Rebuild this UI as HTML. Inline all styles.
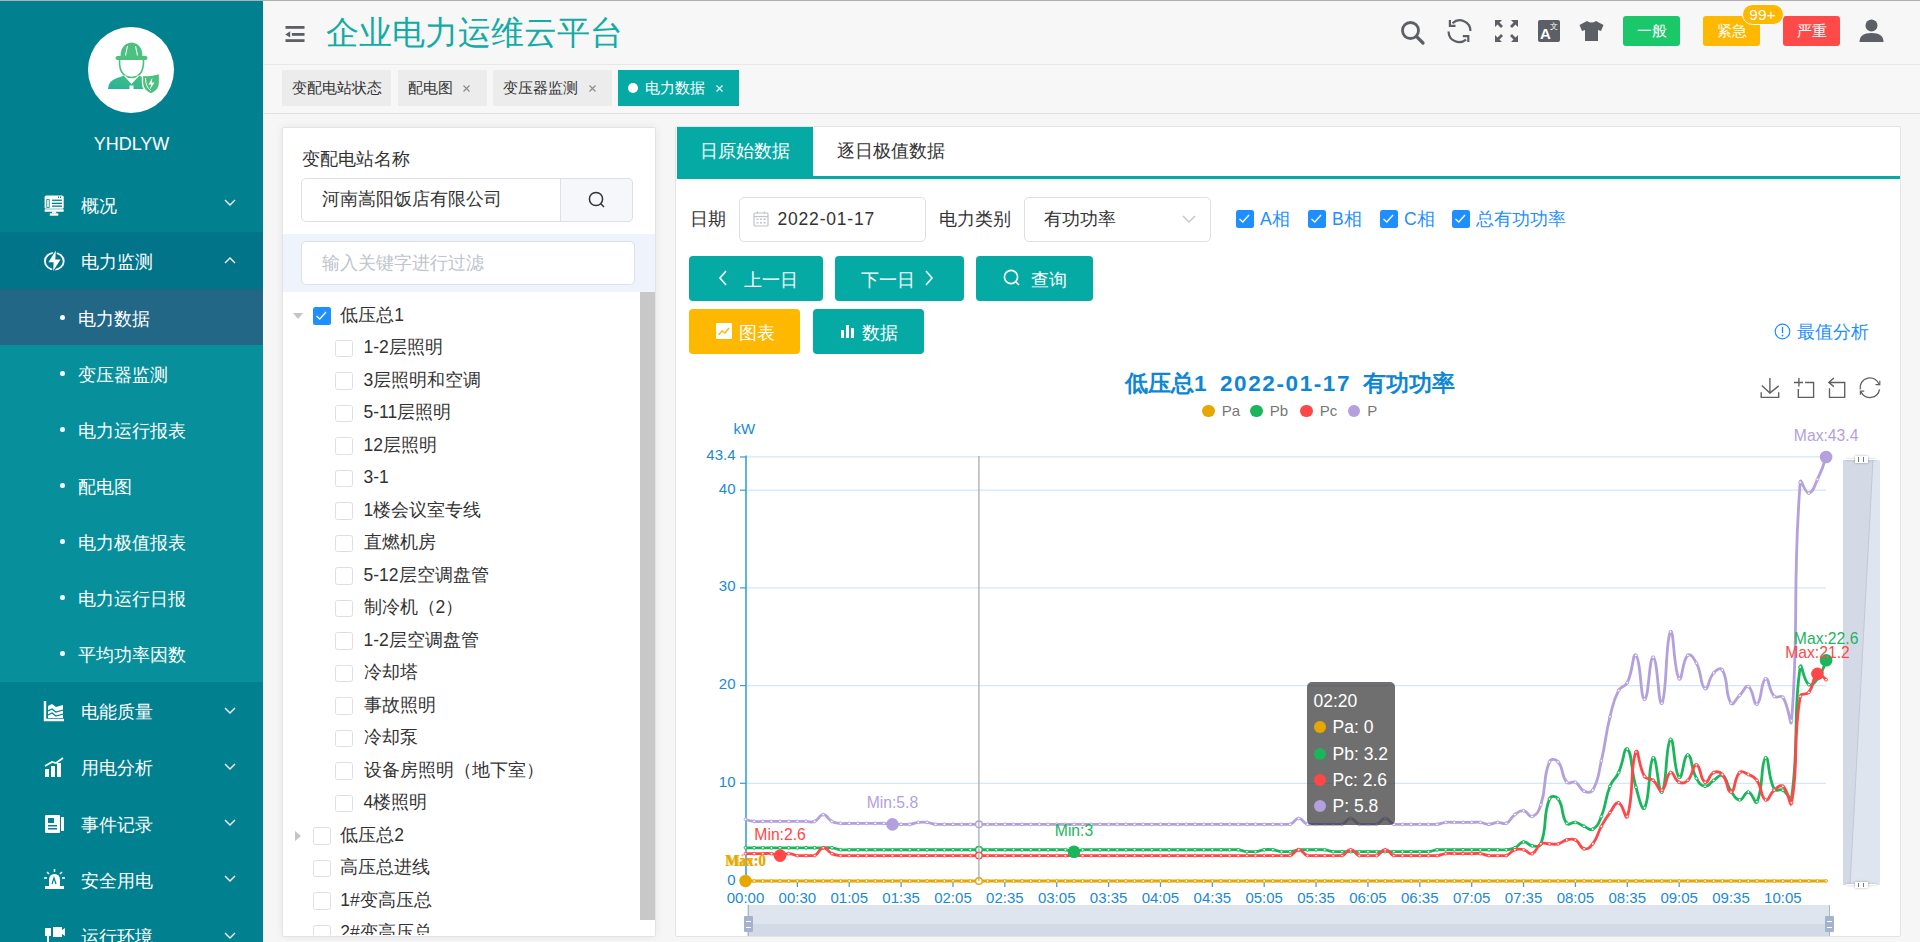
<!DOCTYPE html><html><head><meta charset="utf-8"><style>
*{margin:0;padding:0;box-sizing:border-box}
html,body{width:1920px;height:942px;overflow:hidden;background:#f6f6f6;font-family:"Liberation Sans",sans-serif}
.a{position:absolute}
.t{position:absolute;white-space:nowrap}
svg{position:absolute;overflow:visible}
</style></head><body><div class="a" style="left:0;top:0;width:263px;height:942px;background:#01808f"></div>
<div class="a" style="left:0;top:232px;width:263px;height:57px;background:#01748a"></div>
<div class="a" style="left:0;top:289px;width:263px;height:393px;background:#078f9c"></div>
<div class="a" style="left:0;top:289px;width:263px;height:56px;background:#236786"></div>
<div class="a" style="left:0;top:0;width:1920px;height:1px;background:#b0b0b0;z-index:50"></div>
<div class="a" style="left:88px;top:27px;width:86px;height:86px;border-radius:50%;background:#fff"></div>
<svg style="left:107.5px;top:42px" width="52" height="52" viewBox="0 0 52 52">
<defs><linearGradient id="ag" x1="0" y1="1" x2="1" y2="0"><stop offset="0" stop-color="#22b39b"/><stop offset="1" stop-color="#4cc17c"/></linearGradient></defs>
<path d="M12.5 15 Q12.5 1.5 23.5 0.5 Q34.5 1.5 34.5 15 Z" fill="#4cc17f"/>
<rect x="7.5" y="14" width="32" height="4" rx="2" fill="#4cc17f"/>
<path d="M19.5 4 L17.5 13.5 M27.5 4 L29.5 13.5" stroke="#fff" stroke-width="1.1"/>
<path d="M11.5 18 Q11 35 23.5 35.5 Q36 35 35.5 18" fill="none" stroke="#4cc17f" stroke-width="1.6"/>
<path d="M0 47 Q0.5 38.5 9 36 L16.5 33.5 L23.5 41 L30.5 33.5 L36 35.5 L36 47 Z" fill="url(#ag)"/>
<path d="M16.5 33.5 L23.5 41 L30.5 33.5" fill="none" stroke="#fff" stroke-width="1.2"/>
<rect x="21.5" y="43.5" width="4" height="3.5" fill="#fff"/>
<path d="M34.5 33 Q43 34.5 51.5 31.5 L51.5 41 Q51.5 48.5 43 52 Q34.5 48.5 34.5 41 Z" fill="#4cc17f" stroke="#fff" stroke-width="1.3"/>
<path d="M37.5 36 Q37.5 45 43 49" fill="none" stroke="#fff" stroke-width="0.9"/>
<path d="M44.5 35.5 L40.5 42.5 L43.3 42.5 L41.5 48 L46.5 40.5 L43.6 40.5 Z" fill="#fff"/>
</svg>
<div class="t" style="left:0px;top:132.40px;height:25.20px;line-height:25.20px;font-size:18px;color:#fff;"><div style="width:263px;text-align:center">YHDLYW</div></div>
<svg style="left:43.5px;top:194.0px" width="21" height="21" viewBox="0 0 21 21"><rect x="0.6" y="1.4" width="19.1" height="13.3" rx="1.5" fill="#fff"/><rect x="0.6" y="15.2" width="19.1" height="2.6" rx="0.6" fill="#fff"/><rect x="8" y="17.6" width="4.2" height="1.8" fill="#fff"/><rect x="5.8" y="19.3" width="8.5" height="2.4" fill="#fff"/><rect x="2.4" y="5.2" width="3.2" height="8.6" fill="#01808f"/><rect x="3.2" y="6" width="1.6" height="7" fill="#fff"/><rect x="8" y="5.6" width="10" height="1.3" fill="#01808f"/><rect x="8" y="8.7" width="10" height="1.3" fill="#01808f"/><rect x="8" y="11.5" width="10" height="1.3" fill="#01808f"/><rect x="14" y="2.5" width="1" height="1.5" fill="#01808f"/><rect x="16" y="2.5" width="1" height="1.5" fill="#01808f"/></svg>
<div class="t" style="left:80.5px;top:193.75px;height:24.50px;line-height:24.50px;font-size:17.5px;color:#fff;">概况</div>
<svg style="left:224px;top:198.5px" width="12" height="7" viewBox="0 0 12 7"><path d="M1 1 L6 6 L11 1" fill="none" stroke="#fff" stroke-width="1.4"/></svg>
<svg style="left:43.5px;top:250.3px" width="21" height="21" viewBox="0 0 21 21"><ellipse cx="10.3" cy="11.2" rx="9.4" ry="8.4" fill="none" stroke="#fff" stroke-width="1.8"/><path d="M11.8 0.6 L4.4 12.2 L9.6 12.2 L9.2 21 L16.5 9.6 L11.3 9.6 Z" fill="#fff" stroke="#01748a" stroke-width="2.2" stroke-linejoin="round"/><path d="M11.8 0.6 L4.4 12.2 L9.6 12.2 L9.2 21 L16.5 9.6 L11.3 9.6 Z" fill="#fff"/></svg>
<div class="t" style="left:80.5px;top:250.05px;height:24.50px;line-height:24.50px;font-size:17.5px;color:#fff;">电力监测</div>
<svg style="left:224px;top:256.8px" width="12" height="7" viewBox="0 0 12 7"><path d="M1 6 L6 1 L11 6" fill="none" stroke="#fff" stroke-width="1.4"/></svg>
<div class="a" style="left:60px;top:314.5px;width:5px;height:5px;border-radius:50%;background:#fff"></div>
<div class="t" style="left:78px;top:306.55px;height:24.50px;line-height:24.50px;font-size:17.5px;color:#fff;">电力数据</div>
<div class="a" style="left:60px;top:370.6px;width:5px;height:5px;border-radius:50%;background:#fff"></div>
<div class="t" style="left:78px;top:362.69px;height:24.50px;line-height:24.50px;font-size:17.5px;color:#fff;">变压器监测</div>
<div class="a" style="left:60px;top:426.8px;width:5px;height:5px;border-radius:50%;background:#fff"></div>
<div class="t" style="left:78px;top:418.83px;height:24.50px;line-height:24.50px;font-size:17.5px;color:#fff;">电力运行报表</div>
<div class="a" style="left:60px;top:482.9px;width:5px;height:5px;border-radius:50%;background:#fff"></div>
<div class="t" style="left:78px;top:474.97px;height:24.50px;line-height:24.50px;font-size:17.5px;color:#fff;">配电图</div>
<div class="a" style="left:60px;top:539.1px;width:5px;height:5px;border-radius:50%;background:#fff"></div>
<div class="t" style="left:78px;top:531.11px;height:24.50px;line-height:24.50px;font-size:17.5px;color:#fff;">电力极值报表</div>
<div class="a" style="left:60px;top:595.2px;width:5px;height:5px;border-radius:50%;background:#fff"></div>
<div class="t" style="left:78px;top:587.25px;height:24.50px;line-height:24.50px;font-size:17.5px;color:#fff;">电力运行日报</div>
<div class="a" style="left:60px;top:651.3px;width:5px;height:5px;border-radius:50%;background:#fff"></div>
<div class="t" style="left:78px;top:643.39px;height:24.50px;line-height:24.50px;font-size:17.5px;color:#fff;">平均功率因数</div>
<svg style="left:43.5px;top:700.0px" width="21" height="21" viewBox="0 0 21 21"><path d="M1 1 L1 20 L20 20" fill="none" stroke="#fff" stroke-width="2.4"/><path d="M4 6 L8 4 L12 7 L19 5 L19 18 L4 18 Z" fill="#fff"/><path d="M4 11 L8 9 L12 12 L19 10" stroke="#01808f" stroke-width="1.3" fill="none"/><path d="M4 15 L8 13 L12 16 L19 14" stroke="#01808f" stroke-width="1.3" fill="none"/></svg>
<div class="t" style="left:80.5px;top:699.75px;height:24.50px;line-height:24.50px;font-size:17.5px;color:#fff;">电能质量</div>
<svg style="left:224px;top:706.5px" width="12" height="7" viewBox="0 0 12 7"><path d="M1 1 L6 6 L11 1" fill="none" stroke="#fff" stroke-width="1.4"/></svg>
<svg style="left:43.5px;top:756.5px" width="21" height="21" viewBox="0 0 21 21"><rect x="1" y="12" width="4" height="8" fill="#fff"/><rect x="7" y="9" width="4" height="11" fill="#fff"/><rect x="13" y="6" width="4" height="14" fill="#fff"/><path d="M1 9 L8 5 L12 6 L19 1" stroke="#fff" stroke-width="1.8" fill="none"/></svg>
<div class="t" style="left:80.5px;top:756.25px;height:24.50px;line-height:24.50px;font-size:17.5px;color:#fff;">用电分析</div>
<svg style="left:224px;top:763px" width="12" height="7" viewBox="0 0 12 7"><path d="M1 1 L6 6 L11 1" fill="none" stroke="#fff" stroke-width="1.4"/></svg>
<svg style="left:43.5px;top:812.8px" width="21" height="21" viewBox="0 0 21 21"><rect x="1" y="2" width="15" height="18" rx="1" fill="#fff"/><rect x="4" y="5" width="6" height="5" fill="#01808f"/><rect x="4" y="12" width="9" height="1.5" fill="#01808f"/><rect x="4" y="15" width="9" height="1.5" fill="#01808f"/><rect x="17" y="4" width="3" height="14" fill="#fff"/></svg>
<div class="t" style="left:80.5px;top:812.55px;height:24.50px;line-height:24.50px;font-size:17.5px;color:#fff;">事件记录</div>
<svg style="left:224px;top:819.3px" width="12" height="7" viewBox="0 0 12 7"><path d="M1 1 L6 6 L11 1" fill="none" stroke="#fff" stroke-width="1.4"/></svg>
<svg style="left:43.5px;top:868.9px" width="21" height="21" viewBox="0 0 21 21"><path d="M5 17 L5 11 Q5 5 10.5 5 Q16 5 16 11 L16 17 Z" fill="#fff"/><rect x="1" y="17" width="19" height="3" fill="#fff"/><path d="M10.5 0 L10.5 3 M3 3 L5 5 M18 3 L16 5 M0 9 L3 9 M18 9 L21 9" stroke="#fff" stroke-width="1.5"/><path d="M8 15 L10 9 L12 15" stroke="#01808f" stroke-width="1.2" fill="none"/></svg>
<div class="t" style="left:80.5px;top:868.65px;height:24.50px;line-height:24.50px;font-size:17.5px;color:#fff;">安全用电</div>
<svg style="left:224px;top:875.4px" width="12" height="7" viewBox="0 0 12 7"><path d="M1 1 L6 6 L11 1" fill="none" stroke="#fff" stroke-width="1.4"/></svg>
<svg style="left:43.5px;top:925.0px" width="21" height="21" viewBox="0 0 21 21"><rect x="1" y="3" width="6" height="8" fill="#fff"/><rect x="9" y="2" width="9" height="10" fill="#fff"/><rect x="3" y="11" width="2" height="9" fill="#fff"/><path d="M18 5 L21 3 L21 11 L18 9 Z" fill="#fff"/></svg>
<div class="t" style="left:80.5px;top:924.75px;height:24.50px;line-height:24.50px;font-size:17.5px;color:#fff;">运行环境</div>
<svg style="left:224px;top:931.5px" width="12" height="7" viewBox="0 0 12 7"><path d="M1 1 L6 6 L11 1" fill="none" stroke="#fff" stroke-width="1.4"/></svg>
<div class="a" style="left:263px;top:1px;width:1657px;height:63px;background:#f7f7f7"></div>
<div class="a" style="left:263px;top:64px;width:1657px;height:50px;background:#f7f7f7;border-top:1px solid #e8e8e8;border-bottom:1px solid #e2e2e2"></div>
<svg style="left:284.5px;top:25px" width="21" height="18" viewBox="0 0 21 18"><rect x="0.5" y="1" width="19" height="2.8" fill="#5c5f66"/><rect x="6.9" y="8" width="12.6" height="2.8" fill="#5c5f66"/><rect x="0.5" y="14.2" width="19" height="2.8" fill="#5c5f66"/><path d="M0.3 9.4 L5.2 6.2 L5.2 12.6 Z" fill="#5c5f66"/></svg>
<div class="t" style="left:326px;top:10.40px;height:46.20px;line-height:46.20px;font-size:33px;color:#13aba5;">企业电力运维云平台</div>
<svg style="left:1400px;top:20px" width="26" height="26" viewBox="0 0 26 26"><circle cx="10.5" cy="10.5" r="8" fill="none" stroke="#5c5f66" stroke-width="2.8"/><path d="M16.5 16.5 L23 23" stroke="#5c5f66" stroke-width="3.2" stroke-linecap="round"/></svg>
<svg style="left:1446px;top:19px" width="27" height="26" viewBox="0 0 27 26"><g fill="none" stroke="#5c5f66" stroke-width="2.2"><path d="M6.5 4.2 A10.6 10.6 0 0 1 24.4 12"/><path d="M2.6 12.4 A10.6 10.6 0 0 0 20 20.6"/><path d="M3.9 1 L3.9 6.8 L9.5 6.8"/><path d="M16.8 17.1 L22.3 17.1 L22.3 23"/></g></svg>
<svg style="left:1494px;top:19px" width="25" height="24" viewBox="0 0 25 24"><g fill="#5c5f66"><path d="M1 1 L8 1 L5.5 3.5 L9 7 L7 9 L3.5 5.5 L1 8 Z"/><path d="M24 1 L17 1 L19.5 3.5 L16 7 L18 9 L21.5 5.5 L24 8 Z"/><path d="M1 23 L8 23 L5.5 20.5 L9 17 L7 15 L3.5 18.5 L1 16 Z"/><path d="M24 23 L17 23 L19.5 20.5 L16 17 L18 15 L21.5 18.5 L24 16 Z"/></g></svg>
<svg style="left:1538px;top:20px" width="22" height="22" viewBox="0 0 22 22"><rect x="0" y="0" width="22" height="22" rx="2" fill="#5c5f66"/><text x="2" y="19" font-size="15" font-weight="bold" fill="#fff" font-family="Liberation Sans">A</text><text x="12" y="9" font-size="8" fill="#fff">文</text></svg>
<svg style="left:1579px;top:20px" width="25" height="22" viewBox="0 0 25 22"><path d="M8 1 Q12.5 4 17 1 L24.5 5 L22 11 L19 10 L19 21 L6 21 L6 10 L3 11 L0.5 5 Z" fill="#5c5f66"/></svg>
<div class="a" style="left:1623px;top:16px;width:57px;height:30px;border-radius:3px;background:#1ac769"></div>
<div class="t" style="left:1623px;top:16px;width:57px;height:30px;line-height:30px;text-align:center;font-size:15px;color:#fff">一般</div>
<div class="a" style="left:1703px;top:16px;width:57px;height:30px;border-radius:3px;background:#ffb800"></div>
<div class="t" style="left:1703px;top:16px;width:57px;height:30px;line-height:30px;text-align:center;font-size:15px;color:#fff">紧急</div>
<div class="a" style="left:1783px;top:16px;width:57px;height:30px;border-radius:3px;background:#ff4a4a"></div>
<div class="t" style="left:1783px;top:16px;width:57px;height:30px;line-height:30px;text-align:center;font-size:15px;color:#fff">严重</div>
<div class="a" style="left:1741.5px;top:3.5px;width:42px;height:21px;border-radius:10.5px;background:#ffb800;border:1px solid #fff"></div>
<div class="t" style="left:1741.5px;top:3.5px;width:42px;height:21px;line-height:21px;text-align:center;font-size:15.5px;color:#fff">99+</div>
<svg style="left:1859px;top:19px" width="25" height="24" viewBox="0 0 25 24"><circle cx="12.5" cy="6.5" r="6" fill="#5c5f66"/><path d="M0.5 23 Q0.5 14 12.5 14 Q24.5 14 24.5 23 Z" fill="#5c5f66"/></svg>
<div class="a" style="left:281.5px;top:69.5px;width:109.5px;height:36px;background:#ececec"></div>
<div class="t" style="left:291.5px;top:77.00px;height:21.00px;line-height:21.00px;font-size:15px;color:#333;">变配电站状态</div>
<div class="a" style="left:398px;top:69.5px;width:88.5px;height:36px;background:#ececec"></div>
<div class="t" style="left:408px;top:77.00px;height:21.00px;line-height:21.00px;font-size:15px;color:#333;">配电图</div>
<svg style="left:463.0px;top:85px" width="7" height="7" viewBox="0 0 7 7"><path d="M0.5 0.5 L6.5 6.5 M6.5 0.5 L0.5 6.5" stroke="#8a8a8a" stroke-width="1.1"/></svg>
<div class="a" style="left:493px;top:69.5px;width:119px;height:36px;background:#ececec"></div>
<div class="t" style="left:503px;top:77.00px;height:21.00px;line-height:21.00px;font-size:15px;color:#333;">变压器监测</div>
<svg style="left:588.5px;top:85px" width="7" height="7" viewBox="0 0 7 7"><path d="M0.5 0.5 L6.5 6.5 M6.5 0.5 L0.5 6.5" stroke="#8a8a8a" stroke-width="1.1"/></svg>
<div class="a" style="left:618px;top:69.5px;width:121px;height:36px;background:#06aaa5"></div>
<div class="a" style="left:628px;top:82.5px;width:10px;height:10px;border-radius:50%;background:#fff"></div>
<div class="t" style="left:645px;top:77.00px;height:21.00px;line-height:21.00px;font-size:15px;color:#fff;">电力数据</div>
<svg style="left:715.5px;top:85px" width="7" height="7" viewBox="0 0 7 7"><path d="M0.5 0.5 L6.5 6.5 M6.5 0.5 L0.5 6.5" stroke="#fff" stroke-width="1.1"/></svg>
<div class="a" style="left:281.5px;top:126.5px;width:374px;height:810px;background:#fff;border:1px solid #e3e3e3;border-radius:2px;box-shadow:0 0 9px rgba(0,0,0,0.07)"></div>
<div class="t" style="left:301.5px;top:147.25px;height:24.50px;line-height:24.50px;font-size:17.5px;color:#333;">变配电站名称</div>
<div class="a" style="left:301px;top:177.5px;width:332px;height:44px;border:1px solid #dcdfe6;border-radius:5px;background:#fff"></div>
<div class="a" style="left:560px;top:177.5px;width:73px;height:44px;border:1px solid #dcdfe6;border-radius:0 5px 5px 0;background:#f5f7fa"></div>
<svg style="left:588px;top:191px" width="18" height="18" viewBox="0 0 18 18"><circle cx="8" cy="8" r="6.6" fill="none" stroke="#333" stroke-width="1.5"/><path d="M12.8 12.8 L16 16" stroke="#333" stroke-width="1.5"/></svg>
<div class="t" style="left:321.5px;top:187.25px;height:24.50px;line-height:24.50px;font-size:17.5px;color:#333;">河南嵩阳饭店有限公司</div>
<div class="a" style="left:283px;top:234px;width:372px;height:57.5px;background:#eef3fc"></div>
<div class="a" style="left:301px;top:241px;width:334px;height:44px;border:1px solid #dcdfe6;border-radius:5px;background:#fff"></div>
<div class="t" style="left:321.5px;top:250.75px;height:24.50px;line-height:24.50px;font-size:17.5px;color:#c0c4cc;">输入关键字进行过滤</div>
<div class="a" style="left:640px;top:291.5px;width:15px;height:628px;background:#c8c8c8"></div>
<div class="a" style="left:283px;top:291.5px;width:357px;height:643px;overflow:hidden">
<svg style="left:10px;top:21.5px" width="10" height="6" viewBox="0 0 10 6"><path d="M0 0 L10 0 L5 6 Z" fill="#c0c4cc"/></svg>
<div class="a" style="left:30px;top:15.75px;width:17.5px;height:17.5px;border-radius:2.5px;background:#1f8fff"></div>
<svg style="left:30px;top:15.75px" width="17.5" height="17.5" viewBox="0 0 17.5 17.5"><path d="M3.5 9 L6.8 12 L13 5" fill="none" stroke="#fff" stroke-width="1.3"/></svg>
<div class="t" style="left:57.19999999999999px;top:11.25px;height:24.50px;line-height:24.50px;font-size:17.5px;color:#333;">低压总1</div>
<div class="a" style="left:52.30000000000001px;top:48.25px;width:17.5px;height:17.5px;border-radius:2.5px;border:1px solid #dcdfe6;background:#fff"></div>
<div class="t" style="left:80.5px;top:43.75px;height:24.50px;line-height:24.50px;font-size:17.5px;color:#333;">1-2层照明</div>
<div class="a" style="left:52.30000000000001px;top:80.75px;width:17.5px;height:17.5px;border-radius:2.5px;border:1px solid #dcdfe6;background:#fff"></div>
<div class="t" style="left:80.5px;top:76.25px;height:24.50px;line-height:24.50px;font-size:17.5px;color:#333;">3层照明和空调</div>
<div class="a" style="left:52.30000000000001px;top:113.25px;width:17.5px;height:17.5px;border-radius:2.5px;border:1px solid #dcdfe6;background:#fff"></div>
<div class="t" style="left:80.5px;top:108.75px;height:24.50px;line-height:24.50px;font-size:17.5px;color:#333;">5-11层照明</div>
<div class="a" style="left:52.30000000000001px;top:145.75px;width:17.5px;height:17.5px;border-radius:2.5px;border:1px solid #dcdfe6;background:#fff"></div>
<div class="t" style="left:80.5px;top:141.25px;height:24.50px;line-height:24.50px;font-size:17.5px;color:#333;">12层照明</div>
<div class="a" style="left:52.30000000000001px;top:178.25px;width:17.5px;height:17.5px;border-radius:2.5px;border:1px solid #dcdfe6;background:#fff"></div>
<div class="t" style="left:80.5px;top:173.75px;height:24.50px;line-height:24.50px;font-size:17.5px;color:#333;">3-1</div>
<div class="a" style="left:52.30000000000001px;top:210.75px;width:17.5px;height:17.5px;border-radius:2.5px;border:1px solid #dcdfe6;background:#fff"></div>
<div class="t" style="left:80.5px;top:206.25px;height:24.50px;line-height:24.50px;font-size:17.5px;color:#333;">1楼会议室专线</div>
<div class="a" style="left:52.30000000000001px;top:243.25px;width:17.5px;height:17.5px;border-radius:2.5px;border:1px solid #dcdfe6;background:#fff"></div>
<div class="t" style="left:80.5px;top:238.75px;height:24.50px;line-height:24.50px;font-size:17.5px;color:#333;">直燃机房</div>
<div class="a" style="left:52.30000000000001px;top:275.75px;width:17.5px;height:17.5px;border-radius:2.5px;border:1px solid #dcdfe6;background:#fff"></div>
<div class="t" style="left:80.5px;top:271.25px;height:24.50px;line-height:24.50px;font-size:17.5px;color:#333;">5-12层空调盘管</div>
<div class="a" style="left:52.30000000000001px;top:308.25px;width:17.5px;height:17.5px;border-radius:2.5px;border:1px solid #dcdfe6;background:#fff"></div>
<div class="t" style="left:80.5px;top:303.75px;height:24.50px;line-height:24.50px;font-size:17.5px;color:#333;">制冷机（2）</div>
<div class="a" style="left:52.30000000000001px;top:340.75px;width:17.5px;height:17.5px;border-radius:2.5px;border:1px solid #dcdfe6;background:#fff"></div>
<div class="t" style="left:80.5px;top:336.25px;height:24.50px;line-height:24.50px;font-size:17.5px;color:#333;">1-2层空调盘管</div>
<div class="a" style="left:52.30000000000001px;top:373.25px;width:17.5px;height:17.5px;border-radius:2.5px;border:1px solid #dcdfe6;background:#fff"></div>
<div class="t" style="left:80.5px;top:368.75px;height:24.50px;line-height:24.50px;font-size:17.5px;color:#333;">冷却塔</div>
<div class="a" style="left:52.30000000000001px;top:405.75px;width:17.5px;height:17.5px;border-radius:2.5px;border:1px solid #dcdfe6;background:#fff"></div>
<div class="t" style="left:80.5px;top:401.25px;height:24.50px;line-height:24.50px;font-size:17.5px;color:#333;">事故照明</div>
<div class="a" style="left:52.30000000000001px;top:438.25px;width:17.5px;height:17.5px;border-radius:2.5px;border:1px solid #dcdfe6;background:#fff"></div>
<div class="t" style="left:80.5px;top:433.75px;height:24.50px;line-height:24.50px;font-size:17.5px;color:#333;">冷却泵</div>
<div class="a" style="left:52.30000000000001px;top:470.75px;width:17.5px;height:17.5px;border-radius:2.5px;border:1px solid #dcdfe6;background:#fff"></div>
<div class="t" style="left:80.5px;top:466.25px;height:24.50px;line-height:24.50px;font-size:17.5px;color:#333;">设备房照明（地下室）</div>
<div class="a" style="left:52.30000000000001px;top:503.25px;width:17.5px;height:17.5px;border-radius:2.5px;border:1px solid #dcdfe6;background:#fff"></div>
<div class="t" style="left:80.5px;top:498.75px;height:24.50px;line-height:24.50px;font-size:17.5px;color:#333;">4楼照明</div>
<svg style="left:12px;top:539.5px" width="6" height="10" viewBox="0 0 6 10"><path d="M0 0 L6 5 L0 10 Z" fill="#c0c4cc"/></svg>
<div class="a" style="left:30px;top:535.75px;width:17.5px;height:17.5px;border-radius:2.5px;border:1px solid #dcdfe6;background:#fff"></div>
<div class="t" style="left:57.19999999999999px;top:531.25px;height:24.50px;line-height:24.50px;font-size:17.5px;color:#333;">低压总2</div>
<div class="a" style="left:30px;top:568.25px;width:17.5px;height:17.5px;border-radius:2.5px;border:1px solid #dcdfe6;background:#fff"></div>
<div class="t" style="left:57.19999999999999px;top:563.75px;height:24.50px;line-height:24.50px;font-size:17.5px;color:#333;">高压总进线</div>
<div class="a" style="left:30px;top:600.75px;width:17.5px;height:17.5px;border-radius:2.5px;border:1px solid #dcdfe6;background:#fff"></div>
<div class="t" style="left:57.19999999999999px;top:596.25px;height:24.50px;line-height:24.50px;font-size:17.5px;color:#333;">1#变高压总</div>
<div class="a" style="left:30px;top:633.25px;width:17.5px;height:17.5px;border-radius:2.5px;border:1px solid #dcdfe6;background:#fff"></div>
<div class="t" style="left:57.19999999999999px;top:628.75px;height:24.50px;line-height:24.50px;font-size:17.5px;color:#333;">2#变高压总</div>
</div>
<div class="a" style="left:675px;top:126px;width:1226px;height:810.5px;background:#fff;border:1px solid #e3e3e3;border-radius:2px"></div>
<div class="a" style="left:676.5px;top:175.5px;width:1223.5px;height:3px;background:#06aaa5"></div>
<div class="a" style="left:676.5px;top:127px;width:136.5px;height:49px;background:#06aaa5"></div>
<div class="t" style="left:699.5px;top:138.75px;height:24.50px;line-height:24.50px;font-size:17.5px;color:#fff;">日原始数据</div>
<div class="t" style="left:836.5px;top:138.75px;height:24.50px;line-height:24.50px;font-size:17.5px;color:#333;">逐日极值数据</div>
<div class="t" style="left:690px;top:206.75px;height:24.50px;line-height:24.50px;font-size:17.5px;color:#333;">日期</div>
<div class="a" style="left:739px;top:197px;width:187px;height:45px;border:1px solid #dcdfe6;border-radius:5px"></div>
<svg style="left:752.5px;top:211px" width="16" height="16" viewBox="0 0 16 16"><rect x="1" y="2" width="14" height="13" rx="1" fill="none" stroke="#c0c4cc" stroke-width="1.2"/><path d="M1 5.5 L15 5.5" stroke="#c0c4cc" stroke-width="1.2"/><path d="M4.5 0.5 L4.5 3 M11.5 0.5 L11.5 3" stroke="#c0c4cc" stroke-width="1.2"/><g fill="#c0c4cc"><rect x="3.5" y="7.5" width="2" height="1.5"/><rect x="7" y="7.5" width="2" height="1.5"/><rect x="10.5" y="7.5" width="2" height="1.5"/><rect x="3.5" y="11" width="2" height="1.5"/><rect x="7" y="11" width="2" height="1.5"/><rect x="10.5" y="11" width="2" height="1.5"/></g></svg>
<div class="t" style="left:777.5px;top:206.75px;height:24.50px;line-height:24.50px;font-size:17.5px;color:#333;letter-spacing:0.8px">2022-01-17</div>
<div class="t" style="left:939px;top:206.75px;height:24.50px;line-height:24.50px;font-size:17.5px;color:#333;">电力类别</div>
<div class="a" style="left:1024px;top:197px;width:187px;height:45px;border:1px solid #dcdfe6;border-radius:5px"></div>
<div class="t" style="left:1044px;top:206.75px;height:24.50px;line-height:24.50px;font-size:17.5px;color:#333;">有功功率</div>
<svg style="left:1182px;top:215px" width="14" height="8" viewBox="0 0 14 8"><path d="M1 1 L7 7 L13 1" fill="none" stroke="#c0c4cc" stroke-width="1.3"/></svg>
<div class="a" style="left:1236px;top:210px;width:17.5px;height:17.5px;border-radius:2.5px;background:#1f8fff"></div>
<svg style="left:1236px;top:210px" width="17.5" height="17.5" viewBox="0 0 17.5 17.5"><path d="M3.5 9 L6.8 12 L13 5" fill="none" stroke="#fff" stroke-width="1.3"/></svg>
<div class="t" style="left:1260px;top:207.25px;height:24.50px;line-height:24.50px;font-size:17.5px;color:#1f8fff;">A相</div>
<div class="a" style="left:1308px;top:210px;width:17.5px;height:17.5px;border-radius:2.5px;background:#1f8fff"></div>
<svg style="left:1308px;top:210px" width="17.5" height="17.5" viewBox="0 0 17.5 17.5"><path d="M3.5 9 L6.8 12 L13 5" fill="none" stroke="#fff" stroke-width="1.3"/></svg>
<div class="t" style="left:1332px;top:207.25px;height:24.50px;line-height:24.50px;font-size:17.5px;color:#1f8fff;">B相</div>
<div class="a" style="left:1380px;top:210px;width:17.5px;height:17.5px;border-radius:2.5px;background:#1f8fff"></div>
<svg style="left:1380px;top:210px" width="17.5" height="17.5" viewBox="0 0 17.5 17.5"><path d="M3.5 9 L6.8 12 L13 5" fill="none" stroke="#fff" stroke-width="1.3"/></svg>
<div class="t" style="left:1404px;top:207.25px;height:24.50px;line-height:24.50px;font-size:17.5px;color:#1f8fff;">C相</div>
<div class="a" style="left:1452px;top:210px;width:17.5px;height:17.5px;border-radius:2.5px;background:#1f8fff"></div>
<svg style="left:1452px;top:210px" width="17.5" height="17.5" viewBox="0 0 17.5 17.5"><path d="M3.5 9 L6.8 12 L13 5" fill="none" stroke="#fff" stroke-width="1.3"/></svg>
<div class="t" style="left:1476px;top:207.25px;height:24.50px;line-height:24.50px;font-size:17.5px;color:#1f8fff;">总有功功率</div>
<div class="a" style="left:688.8px;top:256.3px;width:134px;height:44.5px;border-radius:4px;background:#06aaa5"></div>

<svg style="left:718px;top:270px" width="10" height="16" viewBox="0 0 10 16"><path d="M8 1 L2 8 L8 15" fill="none" stroke="#fff" stroke-width="1.6"/></svg>
<div class="t" style="left:744px;top:267.75px;height:24.50px;line-height:24.50px;font-size:17.5px;color:#fff;">上一日</div>
<div class="a" style="left:835px;top:256.3px;width:129px;height:44.5px;border-radius:4px;background:#06aaa5"></div>

<div class="t" style="left:861px;top:267.75px;height:24.50px;line-height:24.50px;font-size:17.5px;color:#fff;">下一日</div>
<svg style="left:924px;top:270px" width="10" height="16" viewBox="0 0 10 16"><path d="M2 1 L8 8 L2 15" fill="none" stroke="#fff" stroke-width="1.6"/></svg>
<div class="a" style="left:976px;top:256.3px;width:117px;height:44.5px;border-radius:4px;background:#06aaa5"></div>

<svg style="left:1003px;top:269px" width="18" height="18" viewBox="0 0 18 18"><circle cx="8" cy="8" r="6.6" fill="none" stroke="#fff" stroke-width="1.6"/><path d="M12.8 12.8 L16 16" stroke="#fff" stroke-width="1.6"/></svg>
<div class="t" style="left:1031px;top:267.75px;height:24.50px;line-height:24.50px;font-size:17.5px;color:#fff;">查询</div>
<div class="a" style="left:688.8px;top:309px;width:111px;height:44.5px;border-radius:4px;background:#ffb800"></div>

<svg style="left:716px;top:323px" width="16" height="16" viewBox="0 0 16 16"><rect x="0" y="0" width="16" height="16" rx="1" fill="#fff"/><path d="M2.5 12 L6 8 L9 10 L13 5" fill="none" stroke="#ffb800" stroke-width="1.4"/></svg>
<div class="t" style="left:739px;top:320.75px;height:24.50px;line-height:24.50px;font-size:17.5px;color:#fff;">图表</div>
<div class="a" style="left:813px;top:309px;width:111px;height:44.5px;border-radius:4px;background:#06aaa5"></div>

<svg style="left:840px;top:323px" width="16" height="16" viewBox="0 0 16 16"><rect x="1" y="7" width="3" height="8" fill="#fff"/><rect x="6" y="2" width="3" height="13" fill="#fff"/><rect x="11" y="5" width="3" height="10" fill="#fff"/></svg>
<div class="t" style="left:862px;top:320.75px;height:24.50px;line-height:24.50px;font-size:17.5px;color:#fff;">数据</div>
<svg style="left:1774px;top:323px" width="17" height="17" viewBox="0 0 17 17"><circle cx="8.5" cy="8.5" r="7.3" fill="none" stroke="#1f8fff" stroke-width="1.2"/><path d="M8.5 4 L8.5 10" stroke="#1f8fff" stroke-width="1.4"/><circle cx="8.5" cy="12.5" r="0.9" fill="#1f8fff"/></svg>
<div class="t" style="left:1797px;top:319.75px;height:24.50px;line-height:24.50px;font-size:17.5px;color:#1f8fff;">最值分析</div>
<div class="a" style="left:747px;top:905px;width:1083px;height:31px;background:#dfe5ee"></div>
<div class="a" style="left:747px;top:924px;width:1083px;height:12px;background:#d2dae6"></div>
<div class="a" style="left:747.5px;top:905px;width:1.4px;height:31px;background:#a8b6cb"></div>
<div class="a" style="left:1828.5px;top:905px;width:1.4px;height:31px;background:#a8b6cb"></div>
<div class="a" style="left:743.8px;top:916px;width:9px;height:16px;border-radius:1px;background:#a4b3cb"></div>
<div class="a" style="left:745.8px;top:920.5px;width:5px;height:1.5px;background:#fff"></div>
<div class="a" style="left:745.8px;top:926.5px;width:5px;height:1.5px;background:#fff"></div>
<div class="a" style="left:1824.8px;top:916px;width:9px;height:16px;border-radius:1px;background:#a4b3cb"></div>
<div class="a" style="left:1826.8px;top:920.5px;width:5px;height:1.5px;background:#fff"></div>
<div class="a" style="left:1826.8px;top:926.5px;width:5px;height:1.5px;background:#fff"></div>
<div class="a" style="left:1842.5px;top:459.5px;width:37px;height:425px;background:#dfe5ee"></div>
<svg style="left:1842.5px;top:459.5px" width="37" height="425" viewBox="0 0 37 425"><path d="M0 0 L30 0 L7 425 L0 425 Z" fill="#d3dae5"/><path d="M30 0 L7 425" stroke="#b9c4d3" stroke-width="0.8"/></svg>
<div class="a" style="left:1846px;top:458.8px;width:30px;height:1.4px;background:#fff;box-shadow:0 0 2.5px rgba(0,0,0,0.35)"></div>
<div class="a" style="left:1855px;top:456.2px;width:12.6px;height:6.6px;background:#fff;box-shadow:0 0 2.5px rgba(0,0,0,0.35)"></div>
<div class="a" style="left:1858.3px;top:457.3px;width:1.1px;height:4.6px;background:#777"></div>
<div class="a" style="left:1862.6px;top:457.3px;width:1.1px;height:4.6px;background:#777"></div>
<div class="a" style="left:1846px;top:884.0999999999999px;width:30px;height:1.4px;background:#fff;box-shadow:0 0 2.5px rgba(0,0,0,0.35)"></div>
<div class="a" style="left:1855px;top:881.5px;width:12.6px;height:6.6px;background:#fff;box-shadow:0 0 2.5px rgba(0,0,0,0.35)"></div>
<div class="a" style="left:1858.3px;top:882.5999999999999px;width:1.1px;height:4.6px;background:#777"></div>
<div class="a" style="left:1862.6px;top:882.5999999999999px;width:1.1px;height:4.6px;background:#777"></div>
<svg style="left:0;top:0" width="1920" height="942" viewBox="0 0 1920 942">
<line x1="746" y1="456.98" x2="1826" y2="456.98" stroke="#d3e7f8" stroke-width="1.25"/>
<line x1="746" y1="490.20" x2="1826" y2="490.20" stroke="#d3e7f8" stroke-width="1.25"/>
<line x1="746" y1="587.90" x2="1826" y2="587.90" stroke="#d3e7f8" stroke-width="1.25"/>
<line x1="746" y1="685.60" x2="1826" y2="685.60" stroke="#d3e7f8" stroke-width="1.25"/>
<line x1="746" y1="783.30" x2="1826" y2="783.30" stroke="#d3e7f8" stroke-width="1.25"/>
<line x1="746" y1="455.5" x2="746" y2="881" stroke="#3a9fdc" stroke-width="1.6"/>
<line x1="740" y1="456.98" x2="746" y2="456.98" stroke="#3a9fdc" stroke-width="1.25"/>
<line x1="740" y1="490.20" x2="746" y2="490.20" stroke="#3a9fdc" stroke-width="1.25"/>
<line x1="740" y1="587.90" x2="746" y2="587.90" stroke="#3a9fdc" stroke-width="1.25"/>
<line x1="740" y1="685.60" x2="746" y2="685.60" stroke="#3a9fdc" stroke-width="1.25"/>
<line x1="740" y1="783.30" x2="746" y2="783.30" stroke="#3a9fdc" stroke-width="1.25"/>
<line x1="740" y1="881.00" x2="746" y2="881.00" stroke="#3a9fdc" stroke-width="1.25"/>
<line x1="745.50" y1="881" x2="745.50" y2="887" stroke="#3a9fdc" stroke-width="1.25"/>
<line x1="797.37" y1="881" x2="797.37" y2="887" stroke="#3a9fdc" stroke-width="1.25"/>
<line x1="849.24" y1="881" x2="849.24" y2="887" stroke="#3a9fdc" stroke-width="1.25"/>
<line x1="901.11" y1="881" x2="901.11" y2="887" stroke="#3a9fdc" stroke-width="1.25"/>
<line x1="952.98" y1="881" x2="952.98" y2="887" stroke="#3a9fdc" stroke-width="1.25"/>
<line x1="1004.85" y1="881" x2="1004.85" y2="887" stroke="#3a9fdc" stroke-width="1.25"/>
<line x1="1056.72" y1="881" x2="1056.72" y2="887" stroke="#3a9fdc" stroke-width="1.25"/>
<line x1="1108.59" y1="881" x2="1108.59" y2="887" stroke="#3a9fdc" stroke-width="1.25"/>
<line x1="1160.46" y1="881" x2="1160.46" y2="887" stroke="#3a9fdc" stroke-width="1.25"/>
<line x1="1212.33" y1="881" x2="1212.33" y2="887" stroke="#3a9fdc" stroke-width="1.25"/>
<line x1="1264.20" y1="881" x2="1264.20" y2="887" stroke="#3a9fdc" stroke-width="1.25"/>
<line x1="1316.07" y1="881" x2="1316.07" y2="887" stroke="#3a9fdc" stroke-width="1.25"/>
<line x1="1367.94" y1="881" x2="1367.94" y2="887" stroke="#3a9fdc" stroke-width="1.25"/>
<line x1="1419.81" y1="881" x2="1419.81" y2="887" stroke="#3a9fdc" stroke-width="1.25"/>
<line x1="1471.68" y1="881" x2="1471.68" y2="887" stroke="#3a9fdc" stroke-width="1.25"/>
<line x1="1523.55" y1="881" x2="1523.55" y2="887" stroke="#3a9fdc" stroke-width="1.25"/>
<line x1="1575.42" y1="881" x2="1575.42" y2="887" stroke="#3a9fdc" stroke-width="1.25"/>
<line x1="1627.29" y1="881" x2="1627.29" y2="887" stroke="#3a9fdc" stroke-width="1.25"/>
<line x1="1679.16" y1="881" x2="1679.16" y2="887" stroke="#3a9fdc" stroke-width="1.25"/>
<path d="M745.50,881.00 C745.50,881.00 749.82,881.00 754.14,881.00 C758.47,881.00 758.47,881.00 762.79,881.00 C767.11,881.00 767.11,881.00 771.43,881.00 C775.76,881.00 775.76,881.00 780.08,881.00 C784.40,881.00 784.40,881.00 788.73,881.00 C793.05,881.00 793.05,881.00 797.37,881.00 C801.69,881.00 801.69,881.00 806.01,881.00 C810.34,881.00 810.34,881.00 814.66,881.00 C818.98,881.00 818.98,881.00 823.30,881.00 C827.63,881.00 827.63,881.00 831.95,881.00 C836.27,881.00 836.27,881.00 840.60,881.00 C844.92,881.00 844.92,881.00 849.24,881.00 C853.56,881.00 853.56,881.00 857.88,881.00 C862.21,881.00 862.21,881.00 866.53,881.00 C870.85,881.00 870.85,881.00 875.17,881.00 C879.50,881.00 879.50,881.00 883.82,881.00 C888.14,881.00 888.14,881.00 892.47,881.00 C896.79,881.00 896.79,881.00 901.11,881.00 C905.43,881.00 905.43,881.00 909.75,881.00 C914.08,881.00 914.08,881.00 918.40,881.00 C922.72,881.00 922.72,881.00 927.04,881.00 C931.37,881.00 931.37,881.00 935.69,881.00 C940.01,881.00 940.01,881.00 944.34,881.00 C948.66,881.00 948.66,881.00 952.98,881.00 C957.30,881.00 957.30,881.00 961.62,881.00 C965.95,881.00 965.95,881.00 970.27,881.00 C974.59,881.00 974.59,881.00 978.91,881.00 C983.24,881.00 983.24,881.00 987.56,881.00 C991.88,881.00 991.88,881.00 996.20,881.00 C1000.53,881.00 1000.53,881.00 1004.85,881.00 C1009.17,881.00 1009.17,881.00 1013.50,881.00 C1017.82,881.00 1017.82,881.00 1022.14,881.00 C1026.46,881.00 1026.46,881.00 1030.78,881.00 C1035.11,881.00 1035.11,881.00 1039.43,881.00 C1043.75,881.00 1043.75,881.00 1048.08,881.00 C1052.40,881.00 1052.40,881.00 1056.72,881.00 C1061.04,881.00 1061.04,881.00 1065.37,881.00 C1069.69,881.00 1069.69,881.00 1074.01,881.00 C1078.33,881.00 1078.33,881.00 1082.65,881.00 C1086.98,881.00 1086.98,881.00 1091.30,881.00 C1095.62,881.00 1095.62,881.00 1099.94,881.00 C1104.27,881.00 1104.27,881.00 1108.59,881.00 C1112.91,881.00 1112.91,881.00 1117.23,881.00 C1121.56,881.00 1121.56,881.00 1125.88,881.00 C1130.20,881.00 1130.20,881.00 1134.53,881.00 C1138.85,881.00 1138.85,881.00 1143.17,881.00 C1147.49,881.00 1147.49,881.00 1151.82,881.00 C1156.14,881.00 1156.14,881.00 1160.46,881.00 C1164.78,881.00 1164.78,881.00 1169.11,881.00 C1173.43,881.00 1173.43,881.00 1177.75,881.00 C1182.07,881.00 1182.07,881.00 1186.39,881.00 C1190.72,881.00 1190.72,881.00 1195.04,881.00 C1199.36,881.00 1199.36,881.00 1203.68,881.00 C1208.01,881.00 1208.01,881.00 1212.33,881.00 C1216.65,881.00 1216.65,881.00 1220.97,881.00 C1225.30,881.00 1225.30,881.00 1229.62,881.00 C1233.94,881.00 1233.94,881.00 1238.26,881.00 C1242.59,881.00 1242.59,881.00 1246.91,881.00 C1251.23,881.00 1251.23,881.00 1255.55,881.00 C1259.88,881.00 1259.88,881.00 1264.20,881.00 C1268.52,881.00 1268.52,881.00 1272.85,881.00 C1277.17,881.00 1277.17,881.00 1281.49,881.00 C1285.81,881.00 1285.81,881.00 1290.13,881.00 C1294.46,881.00 1294.46,881.00 1298.78,881.00 C1303.10,881.00 1303.10,881.00 1307.42,881.00 C1311.75,881.00 1311.75,881.00 1316.07,881.00 C1320.39,881.00 1320.39,881.00 1324.71,881.00 C1329.04,881.00 1329.04,881.00 1333.36,881.00 C1337.68,881.00 1337.68,881.00 1342.01,881.00 C1346.33,881.00 1346.33,881.00 1350.65,881.00 C1354.97,881.00 1354.97,881.00 1359.30,881.00 C1363.62,881.00 1363.62,881.00 1367.94,881.00 C1372.26,881.00 1372.26,881.00 1376.59,881.00 C1380.91,881.00 1380.91,881.00 1385.23,881.00 C1389.55,881.00 1389.55,881.00 1393.88,881.00 C1398.20,881.00 1398.20,881.00 1402.52,881.00 C1406.84,881.00 1406.84,881.00 1411.16,881.00 C1415.49,881.00 1415.49,881.00 1419.81,881.00 C1424.13,881.00 1424.13,881.00 1428.45,881.00 C1432.78,881.00 1432.78,881.00 1437.10,881.00 C1441.42,881.00 1441.42,881.00 1445.74,881.00 C1450.07,881.00 1450.07,881.00 1454.39,881.00 C1458.71,881.00 1458.71,881.00 1463.03,881.00 C1467.36,881.00 1467.36,881.00 1471.68,881.00 C1476.00,881.00 1476.00,881.00 1480.32,881.00 C1484.65,881.00 1484.65,881.00 1488.97,881.00 C1493.29,881.00 1493.29,881.00 1497.62,881.00 C1501.94,881.00 1501.94,881.00 1506.26,881.00 C1510.58,881.00 1510.58,881.00 1514.90,881.00 C1519.23,881.00 1519.23,881.00 1523.55,881.00 C1527.87,881.00 1527.87,881.00 1532.19,881.00 C1536.52,881.00 1536.52,881.00 1540.84,881.00 C1545.16,881.00 1545.16,881.00 1549.49,881.00 C1553.81,881.00 1553.81,881.00 1558.13,881.00 C1562.45,881.00 1562.45,881.00 1566.78,881.00 C1571.10,881.00 1571.10,881.00 1575.42,881.00 C1579.74,881.00 1579.74,881.00 1584.07,881.00 C1588.39,881.00 1588.39,881.00 1592.71,881.00 C1597.03,881.00 1597.03,881.00 1601.36,881.00 C1605.68,881.00 1605.68,881.00 1610.00,881.00 C1614.32,881.00 1614.32,881.00 1618.64,881.00 C1622.97,881.00 1622.97,881.00 1627.29,881.00 C1631.61,881.00 1631.61,881.00 1635.93,881.00 C1640.26,881.00 1640.26,881.00 1644.58,881.00 C1648.90,881.00 1648.90,881.00 1653.22,881.00 C1657.55,881.00 1657.55,881.00 1661.87,881.00 C1666.19,881.00 1666.19,881.00 1670.51,881.00 C1674.84,881.00 1674.84,881.00 1679.16,881.00 C1683.48,881.00 1683.48,881.00 1687.80,881.00 C1692.13,881.00 1692.13,881.00 1696.45,881.00 C1700.77,881.00 1700.77,881.00 1705.09,881.00 C1709.42,881.00 1709.42,881.00 1713.74,881.00 C1718.06,881.00 1718.06,881.00 1722.38,881.00 C1726.71,881.00 1726.71,881.00 1731.03,881.00 C1735.35,881.00 1735.35,881.00 1739.67,881.00 C1744.00,881.00 1744.00,881.00 1748.32,881.00 C1752.64,881.00 1752.64,881.00 1756.96,881.00 C1761.29,881.00 1761.29,881.00 1765.61,881.00 C1769.93,881.00 1769.93,881.00 1774.25,881.00 C1778.58,881.00 1778.58,881.00 1782.90,881.00 C1787.22,881.00 1787.22,881.00 1791.54,881.00 C1795.87,881.00 1795.87,881.00 1800.19,881.00 C1804.51,881.00 1804.51,881.00 1808.84,881.00 C1813.16,881.00 1813.16,881.00 1817.48,881.00 C1821.80,881.00 1826.12,881.00 1826.12,881.00" fill="none" stroke="#e6a800" stroke-width="2.8" stroke-linejoin="round"/>
<circle cx="745.50" cy="881.00" r="1.4" fill="#fff" stroke="#e6a800" stroke-width="1.0"/>
<circle cx="754.14" cy="881.00" r="1.4" fill="#fff" stroke="#e6a800" stroke-width="1.0"/>
<circle cx="762.79" cy="881.00" r="1.4" fill="#fff" stroke="#e6a800" stroke-width="1.0"/>
<circle cx="771.43" cy="881.00" r="1.4" fill="#fff" stroke="#e6a800" stroke-width="1.0"/>
<circle cx="780.08" cy="881.00" r="1.4" fill="#fff" stroke="#e6a800" stroke-width="1.0"/>
<circle cx="788.73" cy="881.00" r="1.4" fill="#fff" stroke="#e6a800" stroke-width="1.0"/>
<circle cx="797.37" cy="881.00" r="1.4" fill="#fff" stroke="#e6a800" stroke-width="1.0"/>
<circle cx="806.01" cy="881.00" r="1.4" fill="#fff" stroke="#e6a800" stroke-width="1.0"/>
<circle cx="814.66" cy="881.00" r="1.4" fill="#fff" stroke="#e6a800" stroke-width="1.0"/>
<circle cx="823.30" cy="881.00" r="1.4" fill="#fff" stroke="#e6a800" stroke-width="1.0"/>
<circle cx="831.95" cy="881.00" r="1.4" fill="#fff" stroke="#e6a800" stroke-width="1.0"/>
<circle cx="840.60" cy="881.00" r="1.4" fill="#fff" stroke="#e6a800" stroke-width="1.0"/>
<circle cx="849.24" cy="881.00" r="1.4" fill="#fff" stroke="#e6a800" stroke-width="1.0"/>
<circle cx="857.88" cy="881.00" r="1.4" fill="#fff" stroke="#e6a800" stroke-width="1.0"/>
<circle cx="866.53" cy="881.00" r="1.4" fill="#fff" stroke="#e6a800" stroke-width="1.0"/>
<circle cx="875.17" cy="881.00" r="1.4" fill="#fff" stroke="#e6a800" stroke-width="1.0"/>
<circle cx="883.82" cy="881.00" r="1.4" fill="#fff" stroke="#e6a800" stroke-width="1.0"/>
<circle cx="892.47" cy="881.00" r="1.4" fill="#fff" stroke="#e6a800" stroke-width="1.0"/>
<circle cx="901.11" cy="881.00" r="1.4" fill="#fff" stroke="#e6a800" stroke-width="1.0"/>
<circle cx="909.75" cy="881.00" r="1.4" fill="#fff" stroke="#e6a800" stroke-width="1.0"/>
<circle cx="918.40" cy="881.00" r="1.4" fill="#fff" stroke="#e6a800" stroke-width="1.0"/>
<circle cx="927.04" cy="881.00" r="1.4" fill="#fff" stroke="#e6a800" stroke-width="1.0"/>
<circle cx="935.69" cy="881.00" r="1.4" fill="#fff" stroke="#e6a800" stroke-width="1.0"/>
<circle cx="944.34" cy="881.00" r="1.4" fill="#fff" stroke="#e6a800" stroke-width="1.0"/>
<circle cx="952.98" cy="881.00" r="1.4" fill="#fff" stroke="#e6a800" stroke-width="1.0"/>
<circle cx="961.62" cy="881.00" r="1.4" fill="#fff" stroke="#e6a800" stroke-width="1.0"/>
<circle cx="970.27" cy="881.00" r="1.4" fill="#fff" stroke="#e6a800" stroke-width="1.0"/>
<circle cx="978.91" cy="881.00" r="3.3" fill="#fff" stroke="#e6a800" stroke-width="1.4"/>
<circle cx="987.56" cy="881.00" r="1.4" fill="#fff" stroke="#e6a800" stroke-width="1.0"/>
<circle cx="996.20" cy="881.00" r="1.4" fill="#fff" stroke="#e6a800" stroke-width="1.0"/>
<circle cx="1004.85" cy="881.00" r="1.4" fill="#fff" stroke="#e6a800" stroke-width="1.0"/>
<circle cx="1013.50" cy="881.00" r="1.4" fill="#fff" stroke="#e6a800" stroke-width="1.0"/>
<circle cx="1022.14" cy="881.00" r="1.4" fill="#fff" stroke="#e6a800" stroke-width="1.0"/>
<circle cx="1030.78" cy="881.00" r="1.4" fill="#fff" stroke="#e6a800" stroke-width="1.0"/>
<circle cx="1039.43" cy="881.00" r="1.4" fill="#fff" stroke="#e6a800" stroke-width="1.0"/>
<circle cx="1048.08" cy="881.00" r="1.4" fill="#fff" stroke="#e6a800" stroke-width="1.0"/>
<circle cx="1056.72" cy="881.00" r="1.4" fill="#fff" stroke="#e6a800" stroke-width="1.0"/>
<circle cx="1065.37" cy="881.00" r="1.4" fill="#fff" stroke="#e6a800" stroke-width="1.0"/>
<circle cx="1074.01" cy="881.00" r="1.4" fill="#fff" stroke="#e6a800" stroke-width="1.0"/>
<circle cx="1082.65" cy="881.00" r="1.4" fill="#fff" stroke="#e6a800" stroke-width="1.0"/>
<circle cx="1091.30" cy="881.00" r="1.4" fill="#fff" stroke="#e6a800" stroke-width="1.0"/>
<circle cx="1099.94" cy="881.00" r="1.4" fill="#fff" stroke="#e6a800" stroke-width="1.0"/>
<circle cx="1108.59" cy="881.00" r="1.4" fill="#fff" stroke="#e6a800" stroke-width="1.0"/>
<circle cx="1117.23" cy="881.00" r="1.4" fill="#fff" stroke="#e6a800" stroke-width="1.0"/>
<circle cx="1125.88" cy="881.00" r="1.4" fill="#fff" stroke="#e6a800" stroke-width="1.0"/>
<circle cx="1134.53" cy="881.00" r="1.4" fill="#fff" stroke="#e6a800" stroke-width="1.0"/>
<circle cx="1143.17" cy="881.00" r="1.4" fill="#fff" stroke="#e6a800" stroke-width="1.0"/>
<circle cx="1151.82" cy="881.00" r="1.4" fill="#fff" stroke="#e6a800" stroke-width="1.0"/>
<circle cx="1160.46" cy="881.00" r="1.4" fill="#fff" stroke="#e6a800" stroke-width="1.0"/>
<circle cx="1169.11" cy="881.00" r="1.4" fill="#fff" stroke="#e6a800" stroke-width="1.0"/>
<circle cx="1177.75" cy="881.00" r="1.4" fill="#fff" stroke="#e6a800" stroke-width="1.0"/>
<circle cx="1186.39" cy="881.00" r="1.4" fill="#fff" stroke="#e6a800" stroke-width="1.0"/>
<circle cx="1195.04" cy="881.00" r="1.4" fill="#fff" stroke="#e6a800" stroke-width="1.0"/>
<circle cx="1203.68" cy="881.00" r="1.4" fill="#fff" stroke="#e6a800" stroke-width="1.0"/>
<circle cx="1212.33" cy="881.00" r="1.4" fill="#fff" stroke="#e6a800" stroke-width="1.0"/>
<circle cx="1220.97" cy="881.00" r="1.4" fill="#fff" stroke="#e6a800" stroke-width="1.0"/>
<circle cx="1229.62" cy="881.00" r="1.4" fill="#fff" stroke="#e6a800" stroke-width="1.0"/>
<circle cx="1238.26" cy="881.00" r="1.4" fill="#fff" stroke="#e6a800" stroke-width="1.0"/>
<circle cx="1246.91" cy="881.00" r="1.4" fill="#fff" stroke="#e6a800" stroke-width="1.0"/>
<circle cx="1255.55" cy="881.00" r="1.4" fill="#fff" stroke="#e6a800" stroke-width="1.0"/>
<circle cx="1264.20" cy="881.00" r="1.4" fill="#fff" stroke="#e6a800" stroke-width="1.0"/>
<circle cx="1272.85" cy="881.00" r="1.4" fill="#fff" stroke="#e6a800" stroke-width="1.0"/>
<circle cx="1281.49" cy="881.00" r="1.4" fill="#fff" stroke="#e6a800" stroke-width="1.0"/>
<circle cx="1290.13" cy="881.00" r="1.4" fill="#fff" stroke="#e6a800" stroke-width="1.0"/>
<circle cx="1298.78" cy="881.00" r="1.4" fill="#fff" stroke="#e6a800" stroke-width="1.0"/>
<circle cx="1307.42" cy="881.00" r="1.4" fill="#fff" stroke="#e6a800" stroke-width="1.0"/>
<circle cx="1316.07" cy="881.00" r="1.4" fill="#fff" stroke="#e6a800" stroke-width="1.0"/>
<circle cx="1324.71" cy="881.00" r="1.4" fill="#fff" stroke="#e6a800" stroke-width="1.0"/>
<circle cx="1333.36" cy="881.00" r="1.4" fill="#fff" stroke="#e6a800" stroke-width="1.0"/>
<circle cx="1342.01" cy="881.00" r="1.4" fill="#fff" stroke="#e6a800" stroke-width="1.0"/>
<circle cx="1350.65" cy="881.00" r="1.4" fill="#fff" stroke="#e6a800" stroke-width="1.0"/>
<circle cx="1359.30" cy="881.00" r="1.4" fill="#fff" stroke="#e6a800" stroke-width="1.0"/>
<circle cx="1367.94" cy="881.00" r="1.4" fill="#fff" stroke="#e6a800" stroke-width="1.0"/>
<circle cx="1376.59" cy="881.00" r="1.4" fill="#fff" stroke="#e6a800" stroke-width="1.0"/>
<circle cx="1385.23" cy="881.00" r="1.4" fill="#fff" stroke="#e6a800" stroke-width="1.0"/>
<circle cx="1393.88" cy="881.00" r="1.4" fill="#fff" stroke="#e6a800" stroke-width="1.0"/>
<circle cx="1402.52" cy="881.00" r="1.4" fill="#fff" stroke="#e6a800" stroke-width="1.0"/>
<circle cx="1411.16" cy="881.00" r="1.4" fill="#fff" stroke="#e6a800" stroke-width="1.0"/>
<circle cx="1419.81" cy="881.00" r="1.4" fill="#fff" stroke="#e6a800" stroke-width="1.0"/>
<circle cx="1428.45" cy="881.00" r="1.4" fill="#fff" stroke="#e6a800" stroke-width="1.0"/>
<circle cx="1437.10" cy="881.00" r="1.4" fill="#fff" stroke="#e6a800" stroke-width="1.0"/>
<circle cx="1445.74" cy="881.00" r="1.4" fill="#fff" stroke="#e6a800" stroke-width="1.0"/>
<circle cx="1454.39" cy="881.00" r="1.4" fill="#fff" stroke="#e6a800" stroke-width="1.0"/>
<circle cx="1463.03" cy="881.00" r="1.4" fill="#fff" stroke="#e6a800" stroke-width="1.0"/>
<circle cx="1471.68" cy="881.00" r="1.4" fill="#fff" stroke="#e6a800" stroke-width="1.0"/>
<circle cx="1480.32" cy="881.00" r="1.4" fill="#fff" stroke="#e6a800" stroke-width="1.0"/>
<circle cx="1488.97" cy="881.00" r="1.4" fill="#fff" stroke="#e6a800" stroke-width="1.0"/>
<circle cx="1497.62" cy="881.00" r="1.4" fill="#fff" stroke="#e6a800" stroke-width="1.0"/>
<circle cx="1506.26" cy="881.00" r="1.4" fill="#fff" stroke="#e6a800" stroke-width="1.0"/>
<circle cx="1514.90" cy="881.00" r="1.4" fill="#fff" stroke="#e6a800" stroke-width="1.0"/>
<circle cx="1523.55" cy="881.00" r="1.4" fill="#fff" stroke="#e6a800" stroke-width="1.0"/>
<circle cx="1532.19" cy="881.00" r="1.4" fill="#fff" stroke="#e6a800" stroke-width="1.0"/>
<circle cx="1540.84" cy="881.00" r="1.4" fill="#fff" stroke="#e6a800" stroke-width="1.0"/>
<circle cx="1549.49" cy="881.00" r="1.4" fill="#fff" stroke="#e6a800" stroke-width="1.0"/>
<circle cx="1558.13" cy="881.00" r="1.4" fill="#fff" stroke="#e6a800" stroke-width="1.0"/>
<circle cx="1566.78" cy="881.00" r="1.4" fill="#fff" stroke="#e6a800" stroke-width="1.0"/>
<circle cx="1575.42" cy="881.00" r="1.4" fill="#fff" stroke="#e6a800" stroke-width="1.0"/>
<circle cx="1584.07" cy="881.00" r="1.4" fill="#fff" stroke="#e6a800" stroke-width="1.0"/>
<circle cx="1592.71" cy="881.00" r="1.4" fill="#fff" stroke="#e6a800" stroke-width="1.0"/>
<circle cx="1601.36" cy="881.00" r="1.4" fill="#fff" stroke="#e6a800" stroke-width="1.0"/>
<circle cx="1610.00" cy="881.00" r="1.4" fill="#fff" stroke="#e6a800" stroke-width="1.0"/>
<circle cx="1618.64" cy="881.00" r="1.4" fill="#fff" stroke="#e6a800" stroke-width="1.0"/>
<circle cx="1627.29" cy="881.00" r="1.4" fill="#fff" stroke="#e6a800" stroke-width="1.0"/>
<circle cx="1635.93" cy="881.00" r="1.4" fill="#fff" stroke="#e6a800" stroke-width="1.0"/>
<circle cx="1644.58" cy="881.00" r="1.4" fill="#fff" stroke="#e6a800" stroke-width="1.0"/>
<circle cx="1653.22" cy="881.00" r="1.4" fill="#fff" stroke="#e6a800" stroke-width="1.0"/>
<circle cx="1661.87" cy="881.00" r="1.4" fill="#fff" stroke="#e6a800" stroke-width="1.0"/>
<circle cx="1670.51" cy="881.00" r="1.4" fill="#fff" stroke="#e6a800" stroke-width="1.0"/>
<circle cx="1679.16" cy="881.00" r="1.4" fill="#fff" stroke="#e6a800" stroke-width="1.0"/>
<circle cx="1687.80" cy="881.00" r="1.4" fill="#fff" stroke="#e6a800" stroke-width="1.0"/>
<circle cx="1696.45" cy="881.00" r="1.4" fill="#fff" stroke="#e6a800" stroke-width="1.0"/>
<circle cx="1705.09" cy="881.00" r="1.4" fill="#fff" stroke="#e6a800" stroke-width="1.0"/>
<circle cx="1713.74" cy="881.00" r="1.4" fill="#fff" stroke="#e6a800" stroke-width="1.0"/>
<circle cx="1722.38" cy="881.00" r="1.4" fill="#fff" stroke="#e6a800" stroke-width="1.0"/>
<circle cx="1731.03" cy="881.00" r="1.4" fill="#fff" stroke="#e6a800" stroke-width="1.0"/>
<circle cx="1739.67" cy="881.00" r="1.4" fill="#fff" stroke="#e6a800" stroke-width="1.0"/>
<circle cx="1748.32" cy="881.00" r="1.4" fill="#fff" stroke="#e6a800" stroke-width="1.0"/>
<circle cx="1756.96" cy="881.00" r="1.4" fill="#fff" stroke="#e6a800" stroke-width="1.0"/>
<circle cx="1765.61" cy="881.00" r="1.4" fill="#fff" stroke="#e6a800" stroke-width="1.0"/>
<circle cx="1774.25" cy="881.00" r="1.4" fill="#fff" stroke="#e6a800" stroke-width="1.0"/>
<circle cx="1782.90" cy="881.00" r="1.4" fill="#fff" stroke="#e6a800" stroke-width="1.0"/>
<circle cx="1791.54" cy="881.00" r="1.4" fill="#fff" stroke="#e6a800" stroke-width="1.0"/>
<circle cx="1800.19" cy="881.00" r="1.4" fill="#fff" stroke="#e6a800" stroke-width="1.0"/>
<circle cx="1808.84" cy="881.00" r="1.4" fill="#fff" stroke="#e6a800" stroke-width="1.0"/>
<circle cx="1817.48" cy="881.00" r="1.4" fill="#fff" stroke="#e6a800" stroke-width="1.0"/>
<circle cx="1826.12" cy="881.00" r="1.4" fill="#fff" stroke="#e6a800" stroke-width="1.0"/>
<path d="M745.50,847.78 C745.50,847.78 749.82,847.78 754.14,847.78 C758.47,847.78 758.47,847.78 762.79,847.78 C767.11,847.78 767.11,847.78 771.43,847.78 C775.76,847.78 775.76,847.78 780.08,847.78 C784.40,847.78 784.40,847.78 788.73,847.78 C793.05,847.78 793.05,847.78 797.37,847.78 C801.69,847.78 801.69,847.78 806.01,847.78 C810.34,847.78 810.34,847.78 814.66,847.78 C818.98,847.78 818.98,847.78 823.30,847.78 C827.63,847.78 827.68,847.30 831.95,847.78 C836.33,848.28 836.22,849.24 840.60,849.74 C844.86,850.22 844.92,849.74 849.24,849.74 C853.56,849.74 853.56,849.74 857.88,849.74 C862.21,849.74 862.21,849.74 866.53,849.74 C870.85,849.74 870.85,849.74 875.17,849.74 C879.50,849.74 879.50,849.74 883.82,849.74 C888.14,849.74 888.14,849.74 892.47,849.74 C896.79,849.74 896.79,849.74 901.11,849.74 C905.43,849.74 905.43,849.74 909.75,849.74 C914.08,849.74 914.08,849.74 918.40,849.74 C922.72,849.74 922.72,849.74 927.04,849.74 C931.37,849.74 931.37,849.74 935.69,849.74 C940.01,849.74 940.01,849.74 944.34,849.74 C948.66,849.74 948.66,849.74 952.98,849.74 C957.30,849.74 957.30,849.74 961.62,849.74 C965.95,849.74 965.95,849.74 970.27,849.74 C974.59,849.74 974.59,849.74 978.91,849.74 C983.24,849.74 983.24,849.74 987.56,849.74 C991.88,849.74 991.88,849.74 996.20,849.74 C1000.53,849.74 1000.53,849.74 1004.85,849.74 C1009.17,849.74 1009.17,849.74 1013.50,849.74 C1017.82,849.74 1017.82,849.74 1022.14,849.74 C1026.46,849.74 1026.46,849.74 1030.78,849.74 C1035.11,849.74 1035.11,849.74 1039.43,849.74 C1043.75,849.74 1043.75,849.74 1048.08,849.74 C1052.40,849.74 1052.40,849.74 1056.72,849.74 C1061.04,849.74 1061.10,849.25 1065.37,849.74 C1069.74,850.23 1069.69,851.69 1074.01,851.69 C1078.33,851.69 1078.28,850.23 1082.65,849.74 C1086.92,849.25 1086.98,849.74 1091.30,849.74 C1095.62,849.74 1095.62,849.74 1099.94,849.74 C1104.27,849.74 1104.27,849.74 1108.59,849.74 C1112.91,849.74 1112.91,849.74 1117.23,849.74 C1121.56,849.74 1121.56,849.74 1125.88,849.74 C1130.20,849.74 1130.20,849.74 1134.53,849.74 C1138.85,849.74 1138.85,849.74 1143.17,849.74 C1147.49,849.74 1147.49,849.74 1151.82,849.74 C1156.14,849.74 1156.14,849.74 1160.46,849.74 C1164.78,849.74 1164.78,849.74 1169.11,849.74 C1173.43,849.74 1173.43,849.74 1177.75,849.74 C1182.07,849.74 1182.07,849.74 1186.39,849.74 C1190.72,849.74 1190.72,849.74 1195.04,849.74 C1199.36,849.74 1199.36,849.74 1203.68,849.74 C1208.01,849.74 1208.01,849.74 1212.33,849.74 C1216.65,849.74 1216.65,849.74 1220.97,849.74 C1225.30,849.74 1225.30,849.74 1229.62,849.74 C1233.94,849.74 1234.00,849.25 1238.26,849.74 C1242.64,850.23 1242.53,851.20 1246.91,851.69 C1251.18,851.69 1251.29,851.69 1255.55,851.69 C1259.93,851.20 1259.82,850.23 1264.20,849.74 C1268.47,849.25 1268.58,849.25 1272.85,849.74 C1277.22,850.23 1277.11,851.20 1281.49,851.69 C1285.76,851.69 1285.87,851.69 1290.13,851.69 C1294.51,851.20 1294.40,850.23 1298.78,849.74 C1303.05,849.25 1303.10,849.74 1307.42,849.74 C1311.75,849.74 1311.75,849.74 1316.07,849.74 C1320.39,849.74 1320.45,849.25 1324.71,849.74 C1329.09,850.23 1328.98,851.20 1333.36,851.69 C1337.63,851.69 1337.68,851.69 1342.01,851.69 C1346.33,851.69 1346.33,851.69 1350.65,851.69 C1354.97,851.69 1354.97,851.69 1359.30,851.69 C1363.62,851.69 1363.62,851.69 1367.94,851.69 C1372.26,851.69 1372.26,851.69 1376.59,851.69 C1380.91,851.69 1380.91,851.69 1385.23,851.69 C1389.55,851.69 1389.55,851.69 1393.88,851.69 C1398.20,851.69 1398.20,851.69 1402.52,851.69 C1406.84,851.69 1406.84,851.69 1411.16,851.69 C1415.49,851.69 1415.49,851.69 1419.81,851.69 C1424.13,851.69 1424.19,851.69 1428.45,851.69 C1432.83,851.20 1432.72,850.23 1437.10,849.74 C1441.37,849.25 1441.42,849.74 1445.74,849.74 C1450.07,849.74 1450.07,849.74 1454.39,849.74 C1458.71,849.74 1458.71,849.74 1463.03,849.74 C1467.36,849.74 1467.36,849.74 1471.68,849.74 C1476.00,849.74 1476.00,849.74 1480.32,849.74 C1484.65,849.74 1484.65,849.74 1488.97,849.74 C1493.29,849.74 1493.29,849.74 1497.62,849.74 C1501.94,849.74 1501.99,850.22 1506.26,849.74 C1510.64,849.24 1510.94,849.58 1514.90,847.78 C1519.58,845.67 1519.02,842.43 1523.55,841.92 C1527.66,841.45 1527.73,845.32 1532.19,845.83 C1536.37,846.30 1539.44,847.68 1540.84,843.87 C1548.08,824.23 1542.21,817.83 1549.49,798.93 C1550.86,795.36 1555.97,795.88 1558.13,798.93 C1564.61,808.09 1560.30,814.58 1566.78,823.36 C1568.95,826.30 1571.28,821.68 1575.42,822.38 C1579.93,823.14 1579.66,824.55 1584.07,826.29 C1588.30,827.96 1589.49,831.04 1592.71,829.22 C1598.13,826.15 1598.52,823.57 1601.36,816.52 C1607.17,802.07 1604.29,800.75 1610.00,786.23 C1612.93,778.77 1615.25,779.85 1618.64,772.55 C1623.89,761.29 1623.92,746.25 1627.29,749.11 C1632.56,753.57 1630.43,768.54 1635.93,787.21 C1639.07,797.85 1641.94,812.20 1644.58,807.73 C1650.58,797.55 1648.13,762.50 1653.22,757.90 C1656.78,754.69 1658.43,795.78 1661.87,792.09 C1667.08,786.50 1665.52,743.57 1670.51,739.34 C1674.17,736.24 1673.81,772.60 1679.16,777.44 C1682.46,780.42 1683.56,754.73 1687.80,754.97 C1692.21,755.22 1690.55,767.75 1696.45,778.41 C1699.20,783.39 1700.54,785.72 1705.09,786.23 C1709.18,786.69 1709.31,783.12 1713.74,780.37 C1717.95,777.75 1719.30,773.56 1722.38,775.48 C1727.94,778.94 1725.92,783.89 1731.03,791.12 C1734.56,796.10 1735.23,799.66 1739.67,799.91 C1743.88,800.15 1744.24,791.63 1748.32,792.09 C1752.89,792.61 1755.02,805.72 1756.96,801.86 C1763.66,788.62 1760.60,761.58 1765.61,757.90 C1769.24,755.23 1767.44,776.45 1774.25,789.16 C1776.08,792.57 1779.20,788.26 1782.90,790.14 C1787.85,792.66 1790.84,802.98 1791.54,797.96 C1799.48,741.43 1792.67,716.34 1800.19,667.04 C1801.31,660.20 1803.20,680.80 1808.84,684.62 C1811.84,686.66 1814.56,682.89 1817.48,678.76 C1823.20,670.67 1826.12,660.20 1826.12,660.20" fill="none" stroke="#1bb55c" stroke-width="2.8" stroke-linejoin="round"/>
<circle cx="745.50" cy="847.78" r="1.4" fill="#fff" stroke="#1bb55c" stroke-width="1.0"/>
<circle cx="754.14" cy="847.78" r="1.4" fill="#fff" stroke="#1bb55c" stroke-width="1.0"/>
<circle cx="762.79" cy="847.78" r="1.4" fill="#fff" stroke="#1bb55c" stroke-width="1.0"/>
<circle cx="771.43" cy="847.78" r="1.4" fill="#fff" stroke="#1bb55c" stroke-width="1.0"/>
<circle cx="780.08" cy="847.78" r="1.4" fill="#fff" stroke="#1bb55c" stroke-width="1.0"/>
<circle cx="788.73" cy="847.78" r="1.4" fill="#fff" stroke="#1bb55c" stroke-width="1.0"/>
<circle cx="797.37" cy="847.78" r="1.4" fill="#fff" stroke="#1bb55c" stroke-width="1.0"/>
<circle cx="806.01" cy="847.78" r="1.4" fill="#fff" stroke="#1bb55c" stroke-width="1.0"/>
<circle cx="814.66" cy="847.78" r="1.4" fill="#fff" stroke="#1bb55c" stroke-width="1.0"/>
<circle cx="823.30" cy="847.78" r="1.4" fill="#fff" stroke="#1bb55c" stroke-width="1.0"/>
<circle cx="831.95" cy="847.78" r="1.4" fill="#fff" stroke="#1bb55c" stroke-width="1.0"/>
<circle cx="840.60" cy="849.74" r="1.4" fill="#fff" stroke="#1bb55c" stroke-width="1.0"/>
<circle cx="849.24" cy="849.74" r="1.4" fill="#fff" stroke="#1bb55c" stroke-width="1.0"/>
<circle cx="857.88" cy="849.74" r="1.4" fill="#fff" stroke="#1bb55c" stroke-width="1.0"/>
<circle cx="866.53" cy="849.74" r="1.4" fill="#fff" stroke="#1bb55c" stroke-width="1.0"/>
<circle cx="875.17" cy="849.74" r="1.4" fill="#fff" stroke="#1bb55c" stroke-width="1.0"/>
<circle cx="883.82" cy="849.74" r="1.4" fill="#fff" stroke="#1bb55c" stroke-width="1.0"/>
<circle cx="892.47" cy="849.74" r="1.4" fill="#fff" stroke="#1bb55c" stroke-width="1.0"/>
<circle cx="901.11" cy="849.74" r="1.4" fill="#fff" stroke="#1bb55c" stroke-width="1.0"/>
<circle cx="909.75" cy="849.74" r="1.4" fill="#fff" stroke="#1bb55c" stroke-width="1.0"/>
<circle cx="918.40" cy="849.74" r="1.4" fill="#fff" stroke="#1bb55c" stroke-width="1.0"/>
<circle cx="927.04" cy="849.74" r="1.4" fill="#fff" stroke="#1bb55c" stroke-width="1.0"/>
<circle cx="935.69" cy="849.74" r="1.4" fill="#fff" stroke="#1bb55c" stroke-width="1.0"/>
<circle cx="944.34" cy="849.74" r="1.4" fill="#fff" stroke="#1bb55c" stroke-width="1.0"/>
<circle cx="952.98" cy="849.74" r="1.4" fill="#fff" stroke="#1bb55c" stroke-width="1.0"/>
<circle cx="961.62" cy="849.74" r="1.4" fill="#fff" stroke="#1bb55c" stroke-width="1.0"/>
<circle cx="970.27" cy="849.74" r="1.4" fill="#fff" stroke="#1bb55c" stroke-width="1.0"/>
<circle cx="978.91" cy="849.74" r="3.3" fill="#fff" stroke="#1bb55c" stroke-width="1.4"/>
<circle cx="987.56" cy="849.74" r="1.4" fill="#fff" stroke="#1bb55c" stroke-width="1.0"/>
<circle cx="996.20" cy="849.74" r="1.4" fill="#fff" stroke="#1bb55c" stroke-width="1.0"/>
<circle cx="1004.85" cy="849.74" r="1.4" fill="#fff" stroke="#1bb55c" stroke-width="1.0"/>
<circle cx="1013.50" cy="849.74" r="1.4" fill="#fff" stroke="#1bb55c" stroke-width="1.0"/>
<circle cx="1022.14" cy="849.74" r="1.4" fill="#fff" stroke="#1bb55c" stroke-width="1.0"/>
<circle cx="1030.78" cy="849.74" r="1.4" fill="#fff" stroke="#1bb55c" stroke-width="1.0"/>
<circle cx="1039.43" cy="849.74" r="1.4" fill="#fff" stroke="#1bb55c" stroke-width="1.0"/>
<circle cx="1048.08" cy="849.74" r="1.4" fill="#fff" stroke="#1bb55c" stroke-width="1.0"/>
<circle cx="1056.72" cy="849.74" r="1.4" fill="#fff" stroke="#1bb55c" stroke-width="1.0"/>
<circle cx="1065.37" cy="849.74" r="1.4" fill="#fff" stroke="#1bb55c" stroke-width="1.0"/>
<circle cx="1074.01" cy="851.69" r="1.4" fill="#fff" stroke="#1bb55c" stroke-width="1.0"/>
<circle cx="1082.65" cy="849.74" r="1.4" fill="#fff" stroke="#1bb55c" stroke-width="1.0"/>
<circle cx="1091.30" cy="849.74" r="1.4" fill="#fff" stroke="#1bb55c" stroke-width="1.0"/>
<circle cx="1099.94" cy="849.74" r="1.4" fill="#fff" stroke="#1bb55c" stroke-width="1.0"/>
<circle cx="1108.59" cy="849.74" r="1.4" fill="#fff" stroke="#1bb55c" stroke-width="1.0"/>
<circle cx="1117.23" cy="849.74" r="1.4" fill="#fff" stroke="#1bb55c" stroke-width="1.0"/>
<circle cx="1125.88" cy="849.74" r="1.4" fill="#fff" stroke="#1bb55c" stroke-width="1.0"/>
<circle cx="1134.53" cy="849.74" r="1.4" fill="#fff" stroke="#1bb55c" stroke-width="1.0"/>
<circle cx="1143.17" cy="849.74" r="1.4" fill="#fff" stroke="#1bb55c" stroke-width="1.0"/>
<circle cx="1151.82" cy="849.74" r="1.4" fill="#fff" stroke="#1bb55c" stroke-width="1.0"/>
<circle cx="1160.46" cy="849.74" r="1.4" fill="#fff" stroke="#1bb55c" stroke-width="1.0"/>
<circle cx="1169.11" cy="849.74" r="1.4" fill="#fff" stroke="#1bb55c" stroke-width="1.0"/>
<circle cx="1177.75" cy="849.74" r="1.4" fill="#fff" stroke="#1bb55c" stroke-width="1.0"/>
<circle cx="1186.39" cy="849.74" r="1.4" fill="#fff" stroke="#1bb55c" stroke-width="1.0"/>
<circle cx="1195.04" cy="849.74" r="1.4" fill="#fff" stroke="#1bb55c" stroke-width="1.0"/>
<circle cx="1203.68" cy="849.74" r="1.4" fill="#fff" stroke="#1bb55c" stroke-width="1.0"/>
<circle cx="1212.33" cy="849.74" r="1.4" fill="#fff" stroke="#1bb55c" stroke-width="1.0"/>
<circle cx="1220.97" cy="849.74" r="1.4" fill="#fff" stroke="#1bb55c" stroke-width="1.0"/>
<circle cx="1229.62" cy="849.74" r="1.4" fill="#fff" stroke="#1bb55c" stroke-width="1.0"/>
<circle cx="1238.26" cy="849.74" r="1.4" fill="#fff" stroke="#1bb55c" stroke-width="1.0"/>
<circle cx="1246.91" cy="851.69" r="1.4" fill="#fff" stroke="#1bb55c" stroke-width="1.0"/>
<circle cx="1255.55" cy="851.69" r="1.4" fill="#fff" stroke="#1bb55c" stroke-width="1.0"/>
<circle cx="1264.20" cy="849.74" r="1.4" fill="#fff" stroke="#1bb55c" stroke-width="1.0"/>
<circle cx="1272.85" cy="849.74" r="1.4" fill="#fff" stroke="#1bb55c" stroke-width="1.0"/>
<circle cx="1281.49" cy="851.69" r="1.4" fill="#fff" stroke="#1bb55c" stroke-width="1.0"/>
<circle cx="1290.13" cy="851.69" r="1.4" fill="#fff" stroke="#1bb55c" stroke-width="1.0"/>
<circle cx="1298.78" cy="849.74" r="1.4" fill="#fff" stroke="#1bb55c" stroke-width="1.0"/>
<circle cx="1307.42" cy="849.74" r="1.4" fill="#fff" stroke="#1bb55c" stroke-width="1.0"/>
<circle cx="1316.07" cy="849.74" r="1.4" fill="#fff" stroke="#1bb55c" stroke-width="1.0"/>
<circle cx="1324.71" cy="849.74" r="1.4" fill="#fff" stroke="#1bb55c" stroke-width="1.0"/>
<circle cx="1333.36" cy="851.69" r="1.4" fill="#fff" stroke="#1bb55c" stroke-width="1.0"/>
<circle cx="1342.01" cy="851.69" r="1.4" fill="#fff" stroke="#1bb55c" stroke-width="1.0"/>
<circle cx="1350.65" cy="851.69" r="1.4" fill="#fff" stroke="#1bb55c" stroke-width="1.0"/>
<circle cx="1359.30" cy="851.69" r="1.4" fill="#fff" stroke="#1bb55c" stroke-width="1.0"/>
<circle cx="1367.94" cy="851.69" r="1.4" fill="#fff" stroke="#1bb55c" stroke-width="1.0"/>
<circle cx="1376.59" cy="851.69" r="1.4" fill="#fff" stroke="#1bb55c" stroke-width="1.0"/>
<circle cx="1385.23" cy="851.69" r="1.4" fill="#fff" stroke="#1bb55c" stroke-width="1.0"/>
<circle cx="1393.88" cy="851.69" r="1.4" fill="#fff" stroke="#1bb55c" stroke-width="1.0"/>
<circle cx="1402.52" cy="851.69" r="1.4" fill="#fff" stroke="#1bb55c" stroke-width="1.0"/>
<circle cx="1411.16" cy="851.69" r="1.4" fill="#fff" stroke="#1bb55c" stroke-width="1.0"/>
<circle cx="1419.81" cy="851.69" r="1.4" fill="#fff" stroke="#1bb55c" stroke-width="1.0"/>
<circle cx="1428.45" cy="851.69" r="1.4" fill="#fff" stroke="#1bb55c" stroke-width="1.0"/>
<circle cx="1437.10" cy="849.74" r="1.4" fill="#fff" stroke="#1bb55c" stroke-width="1.0"/>
<circle cx="1445.74" cy="849.74" r="1.4" fill="#fff" stroke="#1bb55c" stroke-width="1.0"/>
<circle cx="1454.39" cy="849.74" r="1.4" fill="#fff" stroke="#1bb55c" stroke-width="1.0"/>
<circle cx="1463.03" cy="849.74" r="1.4" fill="#fff" stroke="#1bb55c" stroke-width="1.0"/>
<circle cx="1471.68" cy="849.74" r="1.4" fill="#fff" stroke="#1bb55c" stroke-width="1.0"/>
<circle cx="1480.32" cy="849.74" r="1.4" fill="#fff" stroke="#1bb55c" stroke-width="1.0"/>
<circle cx="1488.97" cy="849.74" r="1.4" fill="#fff" stroke="#1bb55c" stroke-width="1.0"/>
<circle cx="1497.62" cy="849.74" r="1.4" fill="#fff" stroke="#1bb55c" stroke-width="1.0"/>
<circle cx="1506.26" cy="849.74" r="1.4" fill="#fff" stroke="#1bb55c" stroke-width="1.0"/>
<circle cx="1514.90" cy="847.78" r="1.4" fill="#fff" stroke="#1bb55c" stroke-width="1.0"/>
<circle cx="1523.55" cy="841.92" r="1.4" fill="#fff" stroke="#1bb55c" stroke-width="1.0"/>
<circle cx="1532.19" cy="845.83" r="1.4" fill="#fff" stroke="#1bb55c" stroke-width="1.0"/>
<circle cx="1540.84" cy="843.87" r="1.4" fill="#fff" stroke="#1bb55c" stroke-width="1.0"/>
<circle cx="1549.49" cy="798.93" r="1.4" fill="#fff" stroke="#1bb55c" stroke-width="1.0"/>
<circle cx="1558.13" cy="798.93" r="1.4" fill="#fff" stroke="#1bb55c" stroke-width="1.0"/>
<circle cx="1566.78" cy="823.36" r="1.4" fill="#fff" stroke="#1bb55c" stroke-width="1.0"/>
<circle cx="1575.42" cy="822.38" r="1.4" fill="#fff" stroke="#1bb55c" stroke-width="1.0"/>
<circle cx="1584.07" cy="826.29" r="1.4" fill="#fff" stroke="#1bb55c" stroke-width="1.0"/>
<circle cx="1592.71" cy="829.22" r="1.4" fill="#fff" stroke="#1bb55c" stroke-width="1.0"/>
<circle cx="1601.36" cy="816.52" r="1.4" fill="#fff" stroke="#1bb55c" stroke-width="1.0"/>
<circle cx="1610.00" cy="786.23" r="1.4" fill="#fff" stroke="#1bb55c" stroke-width="1.0"/>
<circle cx="1618.64" cy="772.55" r="1.4" fill="#fff" stroke="#1bb55c" stroke-width="1.0"/>
<circle cx="1627.29" cy="749.11" r="1.4" fill="#fff" stroke="#1bb55c" stroke-width="1.0"/>
<circle cx="1635.93" cy="787.21" r="1.4" fill="#fff" stroke="#1bb55c" stroke-width="1.0"/>
<circle cx="1644.58" cy="807.73" r="1.4" fill="#fff" stroke="#1bb55c" stroke-width="1.0"/>
<circle cx="1653.22" cy="757.90" r="1.4" fill="#fff" stroke="#1bb55c" stroke-width="1.0"/>
<circle cx="1661.87" cy="792.09" r="1.4" fill="#fff" stroke="#1bb55c" stroke-width="1.0"/>
<circle cx="1670.51" cy="739.34" r="1.4" fill="#fff" stroke="#1bb55c" stroke-width="1.0"/>
<circle cx="1679.16" cy="777.44" r="1.4" fill="#fff" stroke="#1bb55c" stroke-width="1.0"/>
<circle cx="1687.80" cy="754.97" r="1.4" fill="#fff" stroke="#1bb55c" stroke-width="1.0"/>
<circle cx="1696.45" cy="778.41" r="1.4" fill="#fff" stroke="#1bb55c" stroke-width="1.0"/>
<circle cx="1705.09" cy="786.23" r="1.4" fill="#fff" stroke="#1bb55c" stroke-width="1.0"/>
<circle cx="1713.74" cy="780.37" r="1.4" fill="#fff" stroke="#1bb55c" stroke-width="1.0"/>
<circle cx="1722.38" cy="775.48" r="1.4" fill="#fff" stroke="#1bb55c" stroke-width="1.0"/>
<circle cx="1731.03" cy="791.12" r="1.4" fill="#fff" stroke="#1bb55c" stroke-width="1.0"/>
<circle cx="1739.67" cy="799.91" r="1.4" fill="#fff" stroke="#1bb55c" stroke-width="1.0"/>
<circle cx="1748.32" cy="792.09" r="1.4" fill="#fff" stroke="#1bb55c" stroke-width="1.0"/>
<circle cx="1756.96" cy="801.86" r="1.4" fill="#fff" stroke="#1bb55c" stroke-width="1.0"/>
<circle cx="1765.61" cy="757.90" r="1.4" fill="#fff" stroke="#1bb55c" stroke-width="1.0"/>
<circle cx="1774.25" cy="789.16" r="1.4" fill="#fff" stroke="#1bb55c" stroke-width="1.0"/>
<circle cx="1782.90" cy="790.14" r="1.4" fill="#fff" stroke="#1bb55c" stroke-width="1.0"/>
<circle cx="1791.54" cy="797.96" r="1.4" fill="#fff" stroke="#1bb55c" stroke-width="1.0"/>
<circle cx="1800.19" cy="667.04" r="1.4" fill="#fff" stroke="#1bb55c" stroke-width="1.0"/>
<circle cx="1808.84" cy="684.62" r="1.4" fill="#fff" stroke="#1bb55c" stroke-width="1.0"/>
<circle cx="1817.48" cy="678.76" r="1.4" fill="#fff" stroke="#1bb55c" stroke-width="1.0"/>
<circle cx="1826.12" cy="660.20" r="1.4" fill="#fff" stroke="#1bb55c" stroke-width="1.0"/>
<path d="M745.50,853.64 C745.50,853.64 749.82,853.64 754.14,853.64 C758.47,853.64 758.47,853.64 762.79,853.64 C767.11,853.64 767.17,853.16 771.43,853.64 C775.81,854.14 775.76,855.60 780.08,855.60 C784.40,855.60 784.40,853.64 788.73,853.64 C793.05,853.64 792.99,855.10 797.37,855.60 C801.64,855.60 801.69,855.60 806.01,855.60 C810.34,855.60 810.98,855.60 814.66,855.60 C819.62,853.35 818.75,848.30 823.30,847.78 C827.39,847.32 827.27,851.53 831.95,853.64 C835.92,855.44 836.22,855.10 840.60,855.60 C844.86,855.60 844.92,855.60 849.24,855.60 C853.56,855.60 853.56,855.60 857.88,855.60 C862.21,855.60 862.21,855.60 866.53,855.60 C870.85,855.60 870.85,855.60 875.17,855.60 C879.50,855.60 879.50,855.60 883.82,855.60 C888.14,855.60 888.14,855.60 892.47,855.60 C896.79,855.60 896.79,855.60 901.11,855.60 C905.43,855.60 905.43,855.60 909.75,855.60 C914.08,855.60 914.08,855.60 918.40,855.60 C922.72,855.60 922.72,855.60 927.04,855.60 C931.37,855.60 931.37,855.60 935.69,855.60 C940.01,855.60 940.01,855.60 944.34,855.60 C948.66,855.60 948.66,855.60 952.98,855.60 C957.30,855.60 957.30,855.60 961.62,855.60 C965.95,855.60 965.95,855.60 970.27,855.60 C974.59,855.60 974.59,855.60 978.91,855.60 C983.24,855.60 983.24,855.60 987.56,855.60 C991.88,855.60 991.88,855.60 996.20,855.60 C1000.53,855.60 1000.53,855.60 1004.85,855.60 C1009.17,855.60 1009.17,855.60 1013.50,855.60 C1017.82,855.60 1017.82,855.60 1022.14,855.60 C1026.46,855.60 1026.46,855.60 1030.78,855.60 C1035.11,855.60 1035.11,855.60 1039.43,855.60 C1043.75,855.60 1043.75,855.60 1048.08,855.60 C1052.40,855.60 1052.40,855.60 1056.72,855.60 C1061.04,855.60 1061.04,855.60 1065.37,855.60 C1069.69,855.60 1069.69,855.60 1074.01,855.60 C1078.33,855.60 1078.33,855.60 1082.65,855.60 C1086.98,855.60 1086.98,855.60 1091.30,855.60 C1095.62,855.60 1095.62,855.60 1099.94,855.60 C1104.27,855.60 1104.27,855.60 1108.59,855.60 C1112.91,855.60 1112.91,855.60 1117.23,855.60 C1121.56,855.60 1121.56,855.60 1125.88,855.60 C1130.20,855.60 1130.20,855.60 1134.53,855.60 C1138.85,855.60 1138.85,855.60 1143.17,855.60 C1147.49,855.60 1147.49,855.60 1151.82,855.60 C1156.14,855.60 1156.14,855.60 1160.46,855.60 C1164.78,855.60 1164.78,855.60 1169.11,855.60 C1173.43,855.60 1173.43,855.60 1177.75,855.60 C1182.07,855.60 1182.07,855.60 1186.39,855.60 C1190.72,855.60 1190.72,855.60 1195.04,855.60 C1199.36,855.60 1199.36,855.60 1203.68,855.60 C1208.01,855.60 1208.01,855.60 1212.33,855.60 C1216.65,855.60 1216.65,855.60 1220.97,855.60 C1225.30,855.60 1225.30,855.60 1229.62,855.60 C1233.94,855.60 1233.94,855.60 1238.26,855.60 C1242.59,855.60 1242.59,855.60 1246.91,855.60 C1251.23,855.60 1251.23,855.60 1255.55,855.60 C1259.88,855.60 1259.88,855.60 1264.20,855.60 C1268.52,855.60 1268.52,855.60 1272.85,855.60 C1277.17,855.60 1277.17,855.60 1281.49,855.60 C1285.81,855.60 1286.22,855.60 1290.13,855.60 C1294.87,853.99 1294.46,849.74 1298.78,849.74 C1303.10,849.74 1302.69,853.99 1307.42,855.60 C1311.34,855.60 1311.75,855.60 1316.07,855.60 C1320.39,855.60 1320.39,855.60 1324.71,855.60 C1329.04,855.60 1329.04,855.60 1333.36,855.60 C1337.68,855.60 1338.09,855.60 1342.01,855.60 C1346.74,853.99 1346.33,849.74 1350.65,849.74 C1354.97,849.74 1354.56,853.99 1359.30,855.60 C1363.21,855.60 1363.62,855.60 1367.94,855.60 C1372.26,855.60 1372.67,855.60 1376.59,855.60 C1381.32,853.99 1380.91,849.74 1385.23,849.74 C1389.55,849.74 1389.14,853.99 1393.88,855.60 C1397.79,855.60 1398.20,855.60 1402.52,855.60 C1406.84,855.60 1406.84,855.60 1411.16,855.60 C1415.49,855.60 1415.49,855.60 1419.81,855.60 C1424.13,855.60 1424.13,855.60 1428.45,855.60 C1432.78,855.60 1432.83,855.60 1437.10,855.60 C1441.48,855.10 1441.37,854.14 1445.74,853.64 C1450.01,853.16 1450.07,853.64 1454.39,853.64 C1458.71,853.64 1458.71,853.64 1463.03,853.64 C1467.36,853.64 1467.36,853.64 1471.68,853.64 C1476.00,853.64 1476.06,853.16 1480.32,853.64 C1484.70,854.14 1484.59,855.10 1488.97,855.60 C1493.24,855.60 1493.29,855.60 1497.62,855.60 C1501.94,855.60 1502.35,855.60 1506.26,855.60 C1510.99,853.99 1510.17,851.34 1514.90,849.74 C1518.82,848.41 1519.43,848.80 1523.55,849.74 C1528.07,850.76 1528.56,854.88 1532.19,853.64 C1537.20,851.95 1535.64,846.81 1540.84,843.87 C1544.29,841.93 1545.16,843.87 1549.49,843.87 C1553.81,843.87 1554.01,844.81 1558.13,843.87 C1562.65,842.85 1562.25,840.99 1566.78,839.97 C1570.90,839.03 1571.86,838.15 1575.42,839.97 C1580.50,842.55 1579.28,847.68 1584.07,848.76 C1587.92,849.63 1589.80,847.65 1592.71,843.87 C1598.45,836.42 1596.62,834.85 1601.36,826.29 C1605.26,819.22 1605.21,819.10 1610.00,812.61 C1613.86,807.38 1614.79,801.97 1618.64,802.84 C1623.43,803.92 1625.57,821.58 1627.29,816.52 C1634.21,796.18 1629.75,766.36 1635.93,752.04 C1638.40,746.33 1638.25,766.09 1644.58,776.46 C1646.90,780.26 1649.59,777.49 1653.22,780.37 C1658.23,784.33 1658.41,791.70 1661.87,790.14 C1667.06,787.79 1665.33,774.90 1670.51,772.55 C1673.97,770.99 1674.01,780.00 1679.16,782.32 C1682.66,783.90 1684.94,783.28 1687.80,780.37 C1693.58,774.49 1692.33,764.27 1696.45,764.74 C1700.97,765.25 1699.91,779.98 1705.09,782.32 C1708.55,783.88 1708.59,774.88 1713.74,772.55 C1717.24,770.97 1719.69,771.46 1722.38,774.51 C1728.34,781.23 1726.89,792.56 1731.03,792.09 C1735.54,791.58 1733.56,778.77 1739.67,772.55 C1742.21,769.98 1744.35,772.71 1748.32,774.51 C1753.00,776.62 1754.13,776.20 1756.96,780.37 C1762.77,788.90 1760.24,796.88 1765.61,799.91 C1768.89,801.76 1769.25,794.10 1774.25,790.14 C1777.89,787.26 1779.99,784.10 1782.90,786.23 C1788.64,790.45 1790.26,809.54 1791.54,802.84 C1798.90,764.60 1792.25,747.05 1800.19,696.35 C1800.90,691.85 1806.10,696.00 1808.84,692.44 C1814.74,684.76 1811.76,678.08 1817.48,673.88 C1820.40,673.88 1826.12,679.74 1826.12,679.74" fill="none" stroke="#ff4747" stroke-width="2.8" stroke-linejoin="round"/>
<circle cx="745.50" cy="853.64" r="1.4" fill="#fff" stroke="#ff4747" stroke-width="1.0"/>
<circle cx="754.14" cy="853.64" r="1.4" fill="#fff" stroke="#ff4747" stroke-width="1.0"/>
<circle cx="762.79" cy="853.64" r="1.4" fill="#fff" stroke="#ff4747" stroke-width="1.0"/>
<circle cx="771.43" cy="853.64" r="1.4" fill="#fff" stroke="#ff4747" stroke-width="1.0"/>
<circle cx="780.08" cy="855.60" r="1.4" fill="#fff" stroke="#ff4747" stroke-width="1.0"/>
<circle cx="788.73" cy="853.64" r="1.4" fill="#fff" stroke="#ff4747" stroke-width="1.0"/>
<circle cx="797.37" cy="855.60" r="1.4" fill="#fff" stroke="#ff4747" stroke-width="1.0"/>
<circle cx="806.01" cy="855.60" r="1.4" fill="#fff" stroke="#ff4747" stroke-width="1.0"/>
<circle cx="814.66" cy="855.60" r="1.4" fill="#fff" stroke="#ff4747" stroke-width="1.0"/>
<circle cx="823.30" cy="847.78" r="1.4" fill="#fff" stroke="#ff4747" stroke-width="1.0"/>
<circle cx="831.95" cy="853.64" r="1.4" fill="#fff" stroke="#ff4747" stroke-width="1.0"/>
<circle cx="840.60" cy="855.60" r="1.4" fill="#fff" stroke="#ff4747" stroke-width="1.0"/>
<circle cx="849.24" cy="855.60" r="1.4" fill="#fff" stroke="#ff4747" stroke-width="1.0"/>
<circle cx="857.88" cy="855.60" r="1.4" fill="#fff" stroke="#ff4747" stroke-width="1.0"/>
<circle cx="866.53" cy="855.60" r="1.4" fill="#fff" stroke="#ff4747" stroke-width="1.0"/>
<circle cx="875.17" cy="855.60" r="1.4" fill="#fff" stroke="#ff4747" stroke-width="1.0"/>
<circle cx="883.82" cy="855.60" r="1.4" fill="#fff" stroke="#ff4747" stroke-width="1.0"/>
<circle cx="892.47" cy="855.60" r="1.4" fill="#fff" stroke="#ff4747" stroke-width="1.0"/>
<circle cx="901.11" cy="855.60" r="1.4" fill="#fff" stroke="#ff4747" stroke-width="1.0"/>
<circle cx="909.75" cy="855.60" r="1.4" fill="#fff" stroke="#ff4747" stroke-width="1.0"/>
<circle cx="918.40" cy="855.60" r="1.4" fill="#fff" stroke="#ff4747" stroke-width="1.0"/>
<circle cx="927.04" cy="855.60" r="1.4" fill="#fff" stroke="#ff4747" stroke-width="1.0"/>
<circle cx="935.69" cy="855.60" r="1.4" fill="#fff" stroke="#ff4747" stroke-width="1.0"/>
<circle cx="944.34" cy="855.60" r="1.4" fill="#fff" stroke="#ff4747" stroke-width="1.0"/>
<circle cx="952.98" cy="855.60" r="1.4" fill="#fff" stroke="#ff4747" stroke-width="1.0"/>
<circle cx="961.62" cy="855.60" r="1.4" fill="#fff" stroke="#ff4747" stroke-width="1.0"/>
<circle cx="970.27" cy="855.60" r="1.4" fill="#fff" stroke="#ff4747" stroke-width="1.0"/>
<circle cx="978.91" cy="855.60" r="3.3" fill="#fff" stroke="#ff4747" stroke-width="1.4"/>
<circle cx="987.56" cy="855.60" r="1.4" fill="#fff" stroke="#ff4747" stroke-width="1.0"/>
<circle cx="996.20" cy="855.60" r="1.4" fill="#fff" stroke="#ff4747" stroke-width="1.0"/>
<circle cx="1004.85" cy="855.60" r="1.4" fill="#fff" stroke="#ff4747" stroke-width="1.0"/>
<circle cx="1013.50" cy="855.60" r="1.4" fill="#fff" stroke="#ff4747" stroke-width="1.0"/>
<circle cx="1022.14" cy="855.60" r="1.4" fill="#fff" stroke="#ff4747" stroke-width="1.0"/>
<circle cx="1030.78" cy="855.60" r="1.4" fill="#fff" stroke="#ff4747" stroke-width="1.0"/>
<circle cx="1039.43" cy="855.60" r="1.4" fill="#fff" stroke="#ff4747" stroke-width="1.0"/>
<circle cx="1048.08" cy="855.60" r="1.4" fill="#fff" stroke="#ff4747" stroke-width="1.0"/>
<circle cx="1056.72" cy="855.60" r="1.4" fill="#fff" stroke="#ff4747" stroke-width="1.0"/>
<circle cx="1065.37" cy="855.60" r="1.4" fill="#fff" stroke="#ff4747" stroke-width="1.0"/>
<circle cx="1074.01" cy="855.60" r="1.4" fill="#fff" stroke="#ff4747" stroke-width="1.0"/>
<circle cx="1082.65" cy="855.60" r="1.4" fill="#fff" stroke="#ff4747" stroke-width="1.0"/>
<circle cx="1091.30" cy="855.60" r="1.4" fill="#fff" stroke="#ff4747" stroke-width="1.0"/>
<circle cx="1099.94" cy="855.60" r="1.4" fill="#fff" stroke="#ff4747" stroke-width="1.0"/>
<circle cx="1108.59" cy="855.60" r="1.4" fill="#fff" stroke="#ff4747" stroke-width="1.0"/>
<circle cx="1117.23" cy="855.60" r="1.4" fill="#fff" stroke="#ff4747" stroke-width="1.0"/>
<circle cx="1125.88" cy="855.60" r="1.4" fill="#fff" stroke="#ff4747" stroke-width="1.0"/>
<circle cx="1134.53" cy="855.60" r="1.4" fill="#fff" stroke="#ff4747" stroke-width="1.0"/>
<circle cx="1143.17" cy="855.60" r="1.4" fill="#fff" stroke="#ff4747" stroke-width="1.0"/>
<circle cx="1151.82" cy="855.60" r="1.4" fill="#fff" stroke="#ff4747" stroke-width="1.0"/>
<circle cx="1160.46" cy="855.60" r="1.4" fill="#fff" stroke="#ff4747" stroke-width="1.0"/>
<circle cx="1169.11" cy="855.60" r="1.4" fill="#fff" stroke="#ff4747" stroke-width="1.0"/>
<circle cx="1177.75" cy="855.60" r="1.4" fill="#fff" stroke="#ff4747" stroke-width="1.0"/>
<circle cx="1186.39" cy="855.60" r="1.4" fill="#fff" stroke="#ff4747" stroke-width="1.0"/>
<circle cx="1195.04" cy="855.60" r="1.4" fill="#fff" stroke="#ff4747" stroke-width="1.0"/>
<circle cx="1203.68" cy="855.60" r="1.4" fill="#fff" stroke="#ff4747" stroke-width="1.0"/>
<circle cx="1212.33" cy="855.60" r="1.4" fill="#fff" stroke="#ff4747" stroke-width="1.0"/>
<circle cx="1220.97" cy="855.60" r="1.4" fill="#fff" stroke="#ff4747" stroke-width="1.0"/>
<circle cx="1229.62" cy="855.60" r="1.4" fill="#fff" stroke="#ff4747" stroke-width="1.0"/>
<circle cx="1238.26" cy="855.60" r="1.4" fill="#fff" stroke="#ff4747" stroke-width="1.0"/>
<circle cx="1246.91" cy="855.60" r="1.4" fill="#fff" stroke="#ff4747" stroke-width="1.0"/>
<circle cx="1255.55" cy="855.60" r="1.4" fill="#fff" stroke="#ff4747" stroke-width="1.0"/>
<circle cx="1264.20" cy="855.60" r="1.4" fill="#fff" stroke="#ff4747" stroke-width="1.0"/>
<circle cx="1272.85" cy="855.60" r="1.4" fill="#fff" stroke="#ff4747" stroke-width="1.0"/>
<circle cx="1281.49" cy="855.60" r="1.4" fill="#fff" stroke="#ff4747" stroke-width="1.0"/>
<circle cx="1290.13" cy="855.60" r="1.4" fill="#fff" stroke="#ff4747" stroke-width="1.0"/>
<circle cx="1298.78" cy="849.74" r="1.4" fill="#fff" stroke="#ff4747" stroke-width="1.0"/>
<circle cx="1307.42" cy="855.60" r="1.4" fill="#fff" stroke="#ff4747" stroke-width="1.0"/>
<circle cx="1316.07" cy="855.60" r="1.4" fill="#fff" stroke="#ff4747" stroke-width="1.0"/>
<circle cx="1324.71" cy="855.60" r="1.4" fill="#fff" stroke="#ff4747" stroke-width="1.0"/>
<circle cx="1333.36" cy="855.60" r="1.4" fill="#fff" stroke="#ff4747" stroke-width="1.0"/>
<circle cx="1342.01" cy="855.60" r="1.4" fill="#fff" stroke="#ff4747" stroke-width="1.0"/>
<circle cx="1350.65" cy="849.74" r="1.4" fill="#fff" stroke="#ff4747" stroke-width="1.0"/>
<circle cx="1359.30" cy="855.60" r="1.4" fill="#fff" stroke="#ff4747" stroke-width="1.0"/>
<circle cx="1367.94" cy="855.60" r="1.4" fill="#fff" stroke="#ff4747" stroke-width="1.0"/>
<circle cx="1376.59" cy="855.60" r="1.4" fill="#fff" stroke="#ff4747" stroke-width="1.0"/>
<circle cx="1385.23" cy="849.74" r="1.4" fill="#fff" stroke="#ff4747" stroke-width="1.0"/>
<circle cx="1393.88" cy="855.60" r="1.4" fill="#fff" stroke="#ff4747" stroke-width="1.0"/>
<circle cx="1402.52" cy="855.60" r="1.4" fill="#fff" stroke="#ff4747" stroke-width="1.0"/>
<circle cx="1411.16" cy="855.60" r="1.4" fill="#fff" stroke="#ff4747" stroke-width="1.0"/>
<circle cx="1419.81" cy="855.60" r="1.4" fill="#fff" stroke="#ff4747" stroke-width="1.0"/>
<circle cx="1428.45" cy="855.60" r="1.4" fill="#fff" stroke="#ff4747" stroke-width="1.0"/>
<circle cx="1437.10" cy="855.60" r="1.4" fill="#fff" stroke="#ff4747" stroke-width="1.0"/>
<circle cx="1445.74" cy="853.64" r="1.4" fill="#fff" stroke="#ff4747" stroke-width="1.0"/>
<circle cx="1454.39" cy="853.64" r="1.4" fill="#fff" stroke="#ff4747" stroke-width="1.0"/>
<circle cx="1463.03" cy="853.64" r="1.4" fill="#fff" stroke="#ff4747" stroke-width="1.0"/>
<circle cx="1471.68" cy="853.64" r="1.4" fill="#fff" stroke="#ff4747" stroke-width="1.0"/>
<circle cx="1480.32" cy="853.64" r="1.4" fill="#fff" stroke="#ff4747" stroke-width="1.0"/>
<circle cx="1488.97" cy="855.60" r="1.4" fill="#fff" stroke="#ff4747" stroke-width="1.0"/>
<circle cx="1497.62" cy="855.60" r="1.4" fill="#fff" stroke="#ff4747" stroke-width="1.0"/>
<circle cx="1506.26" cy="855.60" r="1.4" fill="#fff" stroke="#ff4747" stroke-width="1.0"/>
<circle cx="1514.90" cy="849.74" r="1.4" fill="#fff" stroke="#ff4747" stroke-width="1.0"/>
<circle cx="1523.55" cy="849.74" r="1.4" fill="#fff" stroke="#ff4747" stroke-width="1.0"/>
<circle cx="1532.19" cy="853.64" r="1.4" fill="#fff" stroke="#ff4747" stroke-width="1.0"/>
<circle cx="1540.84" cy="843.87" r="1.4" fill="#fff" stroke="#ff4747" stroke-width="1.0"/>
<circle cx="1549.49" cy="843.87" r="1.4" fill="#fff" stroke="#ff4747" stroke-width="1.0"/>
<circle cx="1558.13" cy="843.87" r="1.4" fill="#fff" stroke="#ff4747" stroke-width="1.0"/>
<circle cx="1566.78" cy="839.97" r="1.4" fill="#fff" stroke="#ff4747" stroke-width="1.0"/>
<circle cx="1575.42" cy="839.97" r="1.4" fill="#fff" stroke="#ff4747" stroke-width="1.0"/>
<circle cx="1584.07" cy="848.76" r="1.4" fill="#fff" stroke="#ff4747" stroke-width="1.0"/>
<circle cx="1592.71" cy="843.87" r="1.4" fill="#fff" stroke="#ff4747" stroke-width="1.0"/>
<circle cx="1601.36" cy="826.29" r="1.4" fill="#fff" stroke="#ff4747" stroke-width="1.0"/>
<circle cx="1610.00" cy="812.61" r="1.4" fill="#fff" stroke="#ff4747" stroke-width="1.0"/>
<circle cx="1618.64" cy="802.84" r="1.4" fill="#fff" stroke="#ff4747" stroke-width="1.0"/>
<circle cx="1627.29" cy="816.52" r="1.4" fill="#fff" stroke="#ff4747" stroke-width="1.0"/>
<circle cx="1635.93" cy="752.04" r="1.4" fill="#fff" stroke="#ff4747" stroke-width="1.0"/>
<circle cx="1644.58" cy="776.46" r="1.4" fill="#fff" stroke="#ff4747" stroke-width="1.0"/>
<circle cx="1653.22" cy="780.37" r="1.4" fill="#fff" stroke="#ff4747" stroke-width="1.0"/>
<circle cx="1661.87" cy="790.14" r="1.4" fill="#fff" stroke="#ff4747" stroke-width="1.0"/>
<circle cx="1670.51" cy="772.55" r="1.4" fill="#fff" stroke="#ff4747" stroke-width="1.0"/>
<circle cx="1679.16" cy="782.32" r="1.4" fill="#fff" stroke="#ff4747" stroke-width="1.0"/>
<circle cx="1687.80" cy="780.37" r="1.4" fill="#fff" stroke="#ff4747" stroke-width="1.0"/>
<circle cx="1696.45" cy="764.74" r="1.4" fill="#fff" stroke="#ff4747" stroke-width="1.0"/>
<circle cx="1705.09" cy="782.32" r="1.4" fill="#fff" stroke="#ff4747" stroke-width="1.0"/>
<circle cx="1713.74" cy="772.55" r="1.4" fill="#fff" stroke="#ff4747" stroke-width="1.0"/>
<circle cx="1722.38" cy="774.51" r="1.4" fill="#fff" stroke="#ff4747" stroke-width="1.0"/>
<circle cx="1731.03" cy="792.09" r="1.4" fill="#fff" stroke="#ff4747" stroke-width="1.0"/>
<circle cx="1739.67" cy="772.55" r="1.4" fill="#fff" stroke="#ff4747" stroke-width="1.0"/>
<circle cx="1748.32" cy="774.51" r="1.4" fill="#fff" stroke="#ff4747" stroke-width="1.0"/>
<circle cx="1756.96" cy="780.37" r="1.4" fill="#fff" stroke="#ff4747" stroke-width="1.0"/>
<circle cx="1765.61" cy="799.91" r="1.4" fill="#fff" stroke="#ff4747" stroke-width="1.0"/>
<circle cx="1774.25" cy="790.14" r="1.4" fill="#fff" stroke="#ff4747" stroke-width="1.0"/>
<circle cx="1782.90" cy="786.23" r="1.4" fill="#fff" stroke="#ff4747" stroke-width="1.0"/>
<circle cx="1791.54" cy="802.84" r="1.4" fill="#fff" stroke="#ff4747" stroke-width="1.0"/>
<circle cx="1800.19" cy="696.35" r="1.4" fill="#fff" stroke="#ff4747" stroke-width="1.0"/>
<circle cx="1808.84" cy="692.44" r="1.4" fill="#fff" stroke="#ff4747" stroke-width="1.0"/>
<circle cx="1817.48" cy="673.88" r="1.4" fill="#fff" stroke="#ff4747" stroke-width="1.0"/>
<circle cx="1826.12" cy="679.74" r="1.4" fill="#fff" stroke="#ff4747" stroke-width="1.0"/>
<path d="M745.50,819.45 C745.50,819.45 749.77,820.91 754.14,821.40 C758.41,821.89 758.47,821.40 762.79,821.40 C767.11,821.40 767.11,821.40 771.43,821.40 C775.76,821.40 775.76,821.40 780.08,821.40 C784.40,821.40 784.40,821.40 788.73,821.40 C793.05,821.40 793.05,821.40 797.37,821.40 C801.69,821.40 801.69,821.40 806.01,821.40 C810.34,821.40 810.86,822.91 814.66,821.40 C819.51,819.49 818.98,814.56 823.30,814.56 C827.63,814.56 827.16,818.97 831.95,821.40 C835.80,823.36 836.22,822.86 840.60,823.36 C844.86,823.84 844.92,823.36 849.24,823.36 C853.56,823.36 853.56,823.36 857.88,823.36 C862.21,823.36 862.21,823.36 866.53,823.36 C870.85,823.36 870.85,823.36 875.17,823.36 C879.50,823.36 879.51,823.11 883.82,823.36 C888.16,823.60 888.13,824.09 892.47,824.33 C896.77,824.33 896.79,824.33 901.11,824.33 C905.43,824.33 905.49,824.33 909.75,824.33 C914.13,823.84 914.02,822.87 918.40,822.38 C922.67,821.90 922.78,821.90 927.04,822.38 C931.42,822.87 931.31,823.84 935.69,824.33 C939.96,824.33 940.01,824.33 944.34,824.33 C948.66,824.33 948.66,824.33 952.98,824.33 C957.30,824.33 957.30,824.33 961.62,824.33 C965.95,824.33 965.95,824.33 970.27,824.33 C974.59,824.33 974.59,824.33 978.91,824.33 C983.24,824.33 983.24,824.33 987.56,824.33 C991.88,824.33 991.88,824.33 996.20,824.33 C1000.53,824.33 1000.53,824.33 1004.85,824.33 C1009.17,824.33 1009.17,824.33 1013.50,824.33 C1017.82,824.33 1017.82,824.33 1022.14,824.33 C1026.46,824.33 1026.46,824.33 1030.78,824.33 C1035.11,824.33 1035.11,824.33 1039.43,824.33 C1043.75,824.33 1043.75,824.33 1048.08,824.33 C1052.40,824.33 1052.40,824.33 1056.72,824.33 C1061.04,824.33 1061.04,824.33 1065.37,824.33 C1069.69,824.33 1069.69,824.33 1074.01,824.33 C1078.33,824.33 1078.33,824.33 1082.65,824.33 C1086.98,824.33 1086.98,824.33 1091.30,824.33 C1095.62,824.33 1095.62,824.33 1099.94,824.33 C1104.27,824.33 1104.27,824.33 1108.59,824.33 C1112.91,824.33 1112.91,824.33 1117.23,824.33 C1121.56,824.33 1121.56,824.33 1125.88,824.33 C1130.20,824.33 1130.20,824.33 1134.53,824.33 C1138.85,824.33 1138.85,824.33 1143.17,824.33 C1147.49,824.33 1147.49,824.33 1151.82,824.33 C1156.14,824.33 1156.14,824.33 1160.46,824.33 C1164.78,824.33 1164.78,824.33 1169.11,824.33 C1173.43,824.33 1173.43,824.33 1177.75,824.33 C1182.07,824.33 1182.07,824.33 1186.39,824.33 C1190.72,824.33 1190.72,824.33 1195.04,824.33 C1199.36,824.33 1199.36,824.33 1203.68,824.33 C1208.01,824.33 1208.01,824.33 1212.33,824.33 C1216.65,824.33 1216.65,824.33 1220.97,824.33 C1225.30,824.33 1225.30,824.33 1229.62,824.33 C1233.94,824.33 1233.94,824.33 1238.26,824.33 C1242.59,824.33 1242.59,824.33 1246.91,824.33 C1251.23,824.33 1251.23,824.33 1255.55,824.33 C1259.88,824.33 1259.88,824.33 1264.20,824.33 C1268.52,824.33 1268.52,824.33 1272.85,824.33 C1277.17,824.33 1277.17,824.33 1281.49,824.33 C1285.81,824.33 1286.22,824.33 1290.13,824.33 C1294.87,822.73 1294.46,818.47 1298.78,818.47 C1303.10,818.47 1302.69,822.73 1307.42,824.33 C1311.34,824.33 1311.75,824.33 1316.07,824.33 C1320.39,824.33 1320.39,824.33 1324.71,824.33 C1329.04,824.33 1329.04,824.33 1333.36,824.33 C1337.68,824.33 1338.09,824.33 1342.01,824.33 C1346.74,822.73 1346.33,818.47 1350.65,818.47 C1354.97,818.47 1354.56,822.73 1359.30,824.33 C1363.21,824.33 1363.62,824.33 1367.94,824.33 C1372.26,824.33 1372.67,824.33 1376.59,824.33 C1381.32,822.73 1380.91,818.47 1385.23,818.47 C1389.55,818.47 1389.14,822.73 1393.88,824.33 C1397.79,824.33 1398.20,824.33 1402.52,824.33 C1406.84,824.33 1406.84,824.33 1411.16,824.33 C1415.49,824.33 1415.49,824.33 1419.81,824.33 C1424.13,824.33 1424.13,824.33 1428.45,824.33 C1432.78,824.33 1432.83,824.33 1437.10,824.33 C1441.48,823.84 1441.37,822.87 1445.74,822.38 C1450.01,821.90 1450.07,822.38 1454.39,822.38 C1458.71,822.38 1458.71,822.38 1463.03,822.38 C1467.36,822.38 1467.36,822.38 1471.68,822.38 C1476.00,822.38 1476.06,821.90 1480.32,822.38 C1484.70,822.87 1484.65,824.33 1488.97,824.33 C1493.29,824.33 1493.25,822.63 1497.62,822.38 C1501.90,822.14 1502.68,824.33 1506.26,823.36 C1511.33,821.07 1510.02,818.15 1514.90,814.56 C1518.66,811.80 1519.44,810.19 1523.55,810.66 C1528.08,811.17 1528.58,817.74 1532.19,816.52 C1537.23,814.81 1538.68,811.62 1540.84,804.79 C1547.33,784.26 1542.26,779.76 1549.49,761.81 C1550.91,758.27 1555.71,758.94 1558.13,761.81 C1564.36,769.20 1560.55,774.93 1566.78,782.32 C1569.19,785.19 1571.86,780.51 1575.42,782.32 C1580.50,784.91 1579.00,788.82 1584.07,791.12 C1587.64,792.73 1590.79,793.49 1592.71,790.14 C1599.44,778.35 1597.85,775.68 1601.36,760.83 C1606.49,739.05 1604.66,738.58 1610.00,716.86 C1613.31,703.41 1612.56,702.53 1618.64,690.49 C1621.20,685.43 1624.79,687.75 1627.29,682.67 C1633.44,670.16 1632.56,652.07 1635.93,655.31 C1641.21,660.38 1640.16,698.78 1644.58,699.28 C1648.81,699.76 1649.09,656.33 1653.22,657.27 C1657.73,658.29 1658.46,708.19 1661.87,703.19 C1667.11,695.49 1665.32,639.21 1670.51,631.87 C1673.96,626.99 1673.49,671.07 1679.16,678.76 C1682.13,682.79 1681.91,660.64 1687.80,655.31 C1690.55,652.83 1693.83,658.10 1696.45,663.13 C1702.48,674.71 1699.91,685.60 1705.09,688.53 C1708.55,690.48 1708.02,679.04 1713.74,672.90 C1716.66,669.76 1720.57,666.79 1722.38,669.97 C1729.21,681.93 1724.58,693.70 1731.03,703.19 C1733.22,706.41 1735.47,699.41 1739.67,695.37 C1744.12,691.10 1744.98,684.88 1748.32,686.58 C1753.63,689.28 1753.32,705.81 1756.96,704.16 C1761.96,701.90 1760.61,681.02 1765.61,678.76 C1769.26,677.11 1768.27,689.92 1774.25,696.35 C1776.91,699.20 1780.67,694.17 1782.90,697.32 C1789.31,706.38 1790.73,730.96 1791.54,720.77 C1799.37,623.49 1792.02,589.98 1800.19,482.38 C1800.66,476.16 1804.86,493.81 1808.84,493.13 C1813.50,492.34 1814.01,486.72 1817.48,479.45 C1822.65,468.64 1826.12,456.98 1826.12,456.98" fill="none" stroke="#b3a0dc" stroke-width="2.8" stroke-linejoin="round"/>
<circle cx="745.50" cy="819.45" r="1.4" fill="#fff" stroke="#b3a0dc" stroke-width="1.0"/>
<circle cx="754.14" cy="821.40" r="1.4" fill="#fff" stroke="#b3a0dc" stroke-width="1.0"/>
<circle cx="762.79" cy="821.40" r="1.4" fill="#fff" stroke="#b3a0dc" stroke-width="1.0"/>
<circle cx="771.43" cy="821.40" r="1.4" fill="#fff" stroke="#b3a0dc" stroke-width="1.0"/>
<circle cx="780.08" cy="821.40" r="1.4" fill="#fff" stroke="#b3a0dc" stroke-width="1.0"/>
<circle cx="788.73" cy="821.40" r="1.4" fill="#fff" stroke="#b3a0dc" stroke-width="1.0"/>
<circle cx="797.37" cy="821.40" r="1.4" fill="#fff" stroke="#b3a0dc" stroke-width="1.0"/>
<circle cx="806.01" cy="821.40" r="1.4" fill="#fff" stroke="#b3a0dc" stroke-width="1.0"/>
<circle cx="814.66" cy="821.40" r="1.4" fill="#fff" stroke="#b3a0dc" stroke-width="1.0"/>
<circle cx="823.30" cy="814.56" r="1.4" fill="#fff" stroke="#b3a0dc" stroke-width="1.0"/>
<circle cx="831.95" cy="821.40" r="1.4" fill="#fff" stroke="#b3a0dc" stroke-width="1.0"/>
<circle cx="840.60" cy="823.36" r="1.4" fill="#fff" stroke="#b3a0dc" stroke-width="1.0"/>
<circle cx="849.24" cy="823.36" r="1.4" fill="#fff" stroke="#b3a0dc" stroke-width="1.0"/>
<circle cx="857.88" cy="823.36" r="1.4" fill="#fff" stroke="#b3a0dc" stroke-width="1.0"/>
<circle cx="866.53" cy="823.36" r="1.4" fill="#fff" stroke="#b3a0dc" stroke-width="1.0"/>
<circle cx="875.17" cy="823.36" r="1.4" fill="#fff" stroke="#b3a0dc" stroke-width="1.0"/>
<circle cx="883.82" cy="823.36" r="1.4" fill="#fff" stroke="#b3a0dc" stroke-width="1.0"/>
<circle cx="892.47" cy="824.33" r="1.4" fill="#fff" stroke="#b3a0dc" stroke-width="1.0"/>
<circle cx="901.11" cy="824.33" r="1.4" fill="#fff" stroke="#b3a0dc" stroke-width="1.0"/>
<circle cx="909.75" cy="824.33" r="1.4" fill="#fff" stroke="#b3a0dc" stroke-width="1.0"/>
<circle cx="918.40" cy="822.38" r="1.4" fill="#fff" stroke="#b3a0dc" stroke-width="1.0"/>
<circle cx="927.04" cy="822.38" r="1.4" fill="#fff" stroke="#b3a0dc" stroke-width="1.0"/>
<circle cx="935.69" cy="824.33" r="1.4" fill="#fff" stroke="#b3a0dc" stroke-width="1.0"/>
<circle cx="944.34" cy="824.33" r="1.4" fill="#fff" stroke="#b3a0dc" stroke-width="1.0"/>
<circle cx="952.98" cy="824.33" r="1.4" fill="#fff" stroke="#b3a0dc" stroke-width="1.0"/>
<circle cx="961.62" cy="824.33" r="1.4" fill="#fff" stroke="#b3a0dc" stroke-width="1.0"/>
<circle cx="970.27" cy="824.33" r="1.4" fill="#fff" stroke="#b3a0dc" stroke-width="1.0"/>
<circle cx="978.91" cy="824.33" r="3.3" fill="#fff" stroke="#b3a0dc" stroke-width="1.4"/>
<circle cx="987.56" cy="824.33" r="1.4" fill="#fff" stroke="#b3a0dc" stroke-width="1.0"/>
<circle cx="996.20" cy="824.33" r="1.4" fill="#fff" stroke="#b3a0dc" stroke-width="1.0"/>
<circle cx="1004.85" cy="824.33" r="1.4" fill="#fff" stroke="#b3a0dc" stroke-width="1.0"/>
<circle cx="1013.50" cy="824.33" r="1.4" fill="#fff" stroke="#b3a0dc" stroke-width="1.0"/>
<circle cx="1022.14" cy="824.33" r="1.4" fill="#fff" stroke="#b3a0dc" stroke-width="1.0"/>
<circle cx="1030.78" cy="824.33" r="1.4" fill="#fff" stroke="#b3a0dc" stroke-width="1.0"/>
<circle cx="1039.43" cy="824.33" r="1.4" fill="#fff" stroke="#b3a0dc" stroke-width="1.0"/>
<circle cx="1048.08" cy="824.33" r="1.4" fill="#fff" stroke="#b3a0dc" stroke-width="1.0"/>
<circle cx="1056.72" cy="824.33" r="1.4" fill="#fff" stroke="#b3a0dc" stroke-width="1.0"/>
<circle cx="1065.37" cy="824.33" r="1.4" fill="#fff" stroke="#b3a0dc" stroke-width="1.0"/>
<circle cx="1074.01" cy="824.33" r="1.4" fill="#fff" stroke="#b3a0dc" stroke-width="1.0"/>
<circle cx="1082.65" cy="824.33" r="1.4" fill="#fff" stroke="#b3a0dc" stroke-width="1.0"/>
<circle cx="1091.30" cy="824.33" r="1.4" fill="#fff" stroke="#b3a0dc" stroke-width="1.0"/>
<circle cx="1099.94" cy="824.33" r="1.4" fill="#fff" stroke="#b3a0dc" stroke-width="1.0"/>
<circle cx="1108.59" cy="824.33" r="1.4" fill="#fff" stroke="#b3a0dc" stroke-width="1.0"/>
<circle cx="1117.23" cy="824.33" r="1.4" fill="#fff" stroke="#b3a0dc" stroke-width="1.0"/>
<circle cx="1125.88" cy="824.33" r="1.4" fill="#fff" stroke="#b3a0dc" stroke-width="1.0"/>
<circle cx="1134.53" cy="824.33" r="1.4" fill="#fff" stroke="#b3a0dc" stroke-width="1.0"/>
<circle cx="1143.17" cy="824.33" r="1.4" fill="#fff" stroke="#b3a0dc" stroke-width="1.0"/>
<circle cx="1151.82" cy="824.33" r="1.4" fill="#fff" stroke="#b3a0dc" stroke-width="1.0"/>
<circle cx="1160.46" cy="824.33" r="1.4" fill="#fff" stroke="#b3a0dc" stroke-width="1.0"/>
<circle cx="1169.11" cy="824.33" r="1.4" fill="#fff" stroke="#b3a0dc" stroke-width="1.0"/>
<circle cx="1177.75" cy="824.33" r="1.4" fill="#fff" stroke="#b3a0dc" stroke-width="1.0"/>
<circle cx="1186.39" cy="824.33" r="1.4" fill="#fff" stroke="#b3a0dc" stroke-width="1.0"/>
<circle cx="1195.04" cy="824.33" r="1.4" fill="#fff" stroke="#b3a0dc" stroke-width="1.0"/>
<circle cx="1203.68" cy="824.33" r="1.4" fill="#fff" stroke="#b3a0dc" stroke-width="1.0"/>
<circle cx="1212.33" cy="824.33" r="1.4" fill="#fff" stroke="#b3a0dc" stroke-width="1.0"/>
<circle cx="1220.97" cy="824.33" r="1.4" fill="#fff" stroke="#b3a0dc" stroke-width="1.0"/>
<circle cx="1229.62" cy="824.33" r="1.4" fill="#fff" stroke="#b3a0dc" stroke-width="1.0"/>
<circle cx="1238.26" cy="824.33" r="1.4" fill="#fff" stroke="#b3a0dc" stroke-width="1.0"/>
<circle cx="1246.91" cy="824.33" r="1.4" fill="#fff" stroke="#b3a0dc" stroke-width="1.0"/>
<circle cx="1255.55" cy="824.33" r="1.4" fill="#fff" stroke="#b3a0dc" stroke-width="1.0"/>
<circle cx="1264.20" cy="824.33" r="1.4" fill="#fff" stroke="#b3a0dc" stroke-width="1.0"/>
<circle cx="1272.85" cy="824.33" r="1.4" fill="#fff" stroke="#b3a0dc" stroke-width="1.0"/>
<circle cx="1281.49" cy="824.33" r="1.4" fill="#fff" stroke="#b3a0dc" stroke-width="1.0"/>
<circle cx="1290.13" cy="824.33" r="1.4" fill="#fff" stroke="#b3a0dc" stroke-width="1.0"/>
<circle cx="1298.78" cy="818.47" r="1.4" fill="#fff" stroke="#b3a0dc" stroke-width="1.0"/>
<circle cx="1307.42" cy="824.33" r="1.4" fill="#fff" stroke="#b3a0dc" stroke-width="1.0"/>
<circle cx="1316.07" cy="824.33" r="1.4" fill="#fff" stroke="#b3a0dc" stroke-width="1.0"/>
<circle cx="1324.71" cy="824.33" r="1.4" fill="#fff" stroke="#b3a0dc" stroke-width="1.0"/>
<circle cx="1333.36" cy="824.33" r="1.4" fill="#fff" stroke="#b3a0dc" stroke-width="1.0"/>
<circle cx="1342.01" cy="824.33" r="1.4" fill="#fff" stroke="#b3a0dc" stroke-width="1.0"/>
<circle cx="1350.65" cy="818.47" r="1.4" fill="#fff" stroke="#b3a0dc" stroke-width="1.0"/>
<circle cx="1359.30" cy="824.33" r="1.4" fill="#fff" stroke="#b3a0dc" stroke-width="1.0"/>
<circle cx="1367.94" cy="824.33" r="1.4" fill="#fff" stroke="#b3a0dc" stroke-width="1.0"/>
<circle cx="1376.59" cy="824.33" r="1.4" fill="#fff" stroke="#b3a0dc" stroke-width="1.0"/>
<circle cx="1385.23" cy="818.47" r="1.4" fill="#fff" stroke="#b3a0dc" stroke-width="1.0"/>
<circle cx="1393.88" cy="824.33" r="1.4" fill="#fff" stroke="#b3a0dc" stroke-width="1.0"/>
<circle cx="1402.52" cy="824.33" r="1.4" fill="#fff" stroke="#b3a0dc" stroke-width="1.0"/>
<circle cx="1411.16" cy="824.33" r="1.4" fill="#fff" stroke="#b3a0dc" stroke-width="1.0"/>
<circle cx="1419.81" cy="824.33" r="1.4" fill="#fff" stroke="#b3a0dc" stroke-width="1.0"/>
<circle cx="1428.45" cy="824.33" r="1.4" fill="#fff" stroke="#b3a0dc" stroke-width="1.0"/>
<circle cx="1437.10" cy="824.33" r="1.4" fill="#fff" stroke="#b3a0dc" stroke-width="1.0"/>
<circle cx="1445.74" cy="822.38" r="1.4" fill="#fff" stroke="#b3a0dc" stroke-width="1.0"/>
<circle cx="1454.39" cy="822.38" r="1.4" fill="#fff" stroke="#b3a0dc" stroke-width="1.0"/>
<circle cx="1463.03" cy="822.38" r="1.4" fill="#fff" stroke="#b3a0dc" stroke-width="1.0"/>
<circle cx="1471.68" cy="822.38" r="1.4" fill="#fff" stroke="#b3a0dc" stroke-width="1.0"/>
<circle cx="1480.32" cy="822.38" r="1.4" fill="#fff" stroke="#b3a0dc" stroke-width="1.0"/>
<circle cx="1488.97" cy="824.33" r="1.4" fill="#fff" stroke="#b3a0dc" stroke-width="1.0"/>
<circle cx="1497.62" cy="822.38" r="1.4" fill="#fff" stroke="#b3a0dc" stroke-width="1.0"/>
<circle cx="1506.26" cy="823.36" r="1.4" fill="#fff" stroke="#b3a0dc" stroke-width="1.0"/>
<circle cx="1514.90" cy="814.56" r="1.4" fill="#fff" stroke="#b3a0dc" stroke-width="1.0"/>
<circle cx="1523.55" cy="810.66" r="1.4" fill="#fff" stroke="#b3a0dc" stroke-width="1.0"/>
<circle cx="1532.19" cy="816.52" r="1.4" fill="#fff" stroke="#b3a0dc" stroke-width="1.0"/>
<circle cx="1540.84" cy="804.79" r="1.4" fill="#fff" stroke="#b3a0dc" stroke-width="1.0"/>
<circle cx="1549.49" cy="761.81" r="1.4" fill="#fff" stroke="#b3a0dc" stroke-width="1.0"/>
<circle cx="1558.13" cy="761.81" r="1.4" fill="#fff" stroke="#b3a0dc" stroke-width="1.0"/>
<circle cx="1566.78" cy="782.32" r="1.4" fill="#fff" stroke="#b3a0dc" stroke-width="1.0"/>
<circle cx="1575.42" cy="782.32" r="1.4" fill="#fff" stroke="#b3a0dc" stroke-width="1.0"/>
<circle cx="1584.07" cy="791.12" r="1.4" fill="#fff" stroke="#b3a0dc" stroke-width="1.0"/>
<circle cx="1592.71" cy="790.14" r="1.4" fill="#fff" stroke="#b3a0dc" stroke-width="1.0"/>
<circle cx="1601.36" cy="760.83" r="1.4" fill="#fff" stroke="#b3a0dc" stroke-width="1.0"/>
<circle cx="1610.00" cy="716.86" r="1.4" fill="#fff" stroke="#b3a0dc" stroke-width="1.0"/>
<circle cx="1618.64" cy="690.49" r="1.4" fill="#fff" stroke="#b3a0dc" stroke-width="1.0"/>
<circle cx="1627.29" cy="682.67" r="1.4" fill="#fff" stroke="#b3a0dc" stroke-width="1.0"/>
<circle cx="1635.93" cy="655.31" r="1.4" fill="#fff" stroke="#b3a0dc" stroke-width="1.0"/>
<circle cx="1644.58" cy="699.28" r="1.4" fill="#fff" stroke="#b3a0dc" stroke-width="1.0"/>
<circle cx="1653.22" cy="657.27" r="1.4" fill="#fff" stroke="#b3a0dc" stroke-width="1.0"/>
<circle cx="1661.87" cy="703.19" r="1.4" fill="#fff" stroke="#b3a0dc" stroke-width="1.0"/>
<circle cx="1670.51" cy="631.87" r="1.4" fill="#fff" stroke="#b3a0dc" stroke-width="1.0"/>
<circle cx="1679.16" cy="678.76" r="1.4" fill="#fff" stroke="#b3a0dc" stroke-width="1.0"/>
<circle cx="1687.80" cy="655.31" r="1.4" fill="#fff" stroke="#b3a0dc" stroke-width="1.0"/>
<circle cx="1696.45" cy="663.13" r="1.4" fill="#fff" stroke="#b3a0dc" stroke-width="1.0"/>
<circle cx="1705.09" cy="688.53" r="1.4" fill="#fff" stroke="#b3a0dc" stroke-width="1.0"/>
<circle cx="1713.74" cy="672.90" r="1.4" fill="#fff" stroke="#b3a0dc" stroke-width="1.0"/>
<circle cx="1722.38" cy="669.97" r="1.4" fill="#fff" stroke="#b3a0dc" stroke-width="1.0"/>
<circle cx="1731.03" cy="703.19" r="1.4" fill="#fff" stroke="#b3a0dc" stroke-width="1.0"/>
<circle cx="1739.67" cy="695.37" r="1.4" fill="#fff" stroke="#b3a0dc" stroke-width="1.0"/>
<circle cx="1748.32" cy="686.58" r="1.4" fill="#fff" stroke="#b3a0dc" stroke-width="1.0"/>
<circle cx="1756.96" cy="704.16" r="1.4" fill="#fff" stroke="#b3a0dc" stroke-width="1.0"/>
<circle cx="1765.61" cy="678.76" r="1.4" fill="#fff" stroke="#b3a0dc" stroke-width="1.0"/>
<circle cx="1774.25" cy="696.35" r="1.4" fill="#fff" stroke="#b3a0dc" stroke-width="1.0"/>
<circle cx="1782.90" cy="697.32" r="1.4" fill="#fff" stroke="#b3a0dc" stroke-width="1.0"/>
<circle cx="1791.54" cy="720.77" r="1.4" fill="#fff" stroke="#b3a0dc" stroke-width="1.0"/>
<circle cx="1800.19" cy="482.38" r="1.4" fill="#fff" stroke="#b3a0dc" stroke-width="1.0"/>
<circle cx="1808.84" cy="493.13" r="1.4" fill="#fff" stroke="#b3a0dc" stroke-width="1.0"/>
<circle cx="1817.48" cy="479.45" r="1.4" fill="#fff" stroke="#b3a0dc" stroke-width="1.0"/>
<circle cx="1826.12" cy="456.98" r="1.4" fill="#fff" stroke="#b3a0dc" stroke-width="1.0"/>
<line x1="978.91" y1="456" x2="978.91" y2="881" stroke="#a8a8a8" stroke-width="1.25"/>
<circle cx="745.50" cy="881" r="6.2" fill="#e6a800"/>
<text x="745.5" y="865.8" text-anchor="middle" font-size="16" font-weight="bold" fill="#e6a800" font-family="Liberation Serif" textLength="41" lengthAdjust="spacingAndGlyphs">Max:0</text>
<text x="746" y="865.8" text-anchor="middle" font-size="16" font-weight="bold" fill="#e6a800" font-family="Liberation Serif" opacity="0.7" textLength="40" lengthAdjust="spacingAndGlyphs">Min:0</text>
<circle cx="780.08" cy="855.60" r="6.3" fill="#ff4747"/>
<text x="780.08" y="839.60" text-anchor="middle" font-size="15.7" fill="#ff4747" font-family="Liberation Sans">Min:2.6</text>
<circle cx="892.47" cy="824.33" r="6.3" fill="#b3a0dc"/>
<text x="892.47" y="808.33" text-anchor="middle" font-size="15.7" fill="#b3a0dc" font-family="Liberation Sans">Min:5.8</text>
<circle cx="1074.01" cy="851.69" r="6.3" fill="#1bb55c"/>
<text x="1074.01" y="835.69" text-anchor="middle" font-size="15.7" fill="#1bb55c" font-family="Liberation Sans">Min:3</text>
<circle cx="1826.12" cy="456.98" r="6.3" fill="#b3a0dc"/>
<text x="1826.12" y="440.98" text-anchor="middle" font-size="15.7" fill="#b3a0dc" font-family="Liberation Sans">Max:43.4</text>
<circle cx="1826.12" cy="660.20" r="6.3" fill="#1bb55c"/>
<text x="1826.12" y="644.20" text-anchor="middle" font-size="15.7" fill="#1bb55c" font-family="Liberation Sans">Max:22.6</text>
<circle cx="1817.48" cy="673.88" r="6.3" fill="#ff4747"/>
<text x="1817.48" y="657.88" text-anchor="middle" font-size="15.7" fill="#ff4747" font-family="Liberation Sans">Max:21.2</text>
</svg>
<div class="t" style="left:600px;width:135.5px;text-align:right;top:445.48px;height:20px;line-height:20px;font-size:15px;color:#1a8ad4">43.4</div>
<div class="t" style="left:600px;width:135.5px;text-align:right;top:478.70px;height:20px;line-height:20px;font-size:15px;color:#1a8ad4">40</div>
<div class="t" style="left:600px;width:135.5px;text-align:right;top:576.40px;height:20px;line-height:20px;font-size:15px;color:#1a8ad4">30</div>
<div class="t" style="left:600px;width:135.5px;text-align:right;top:674.10px;height:20px;line-height:20px;font-size:15px;color:#1a8ad4">20</div>
<div class="t" style="left:600px;width:135.5px;text-align:right;top:771.80px;height:20px;line-height:20px;font-size:15px;color:#1a8ad4">10</div>
<div class="t" style="left:600px;width:135.5px;text-align:right;top:869.50px;height:20px;line-height:20px;font-size:15px;color:#1a8ad4">0</div>
<div class="t" style="left:733.5px;top:418.5px;height:20px;line-height:20px;font-size:15px;color:#1a8ad4">kW</div>
<div class="t" style="left:705.50px;width:80px;text-align:center;top:887.5px;height:20px;line-height:20px;font-size:15px;color:#1a8ad4">00:00</div>
<div class="t" style="left:757.37px;width:80px;text-align:center;top:887.5px;height:20px;line-height:20px;font-size:15px;color:#1a8ad4">00:30</div>
<div class="t" style="left:809.24px;width:80px;text-align:center;top:887.5px;height:20px;line-height:20px;font-size:15px;color:#1a8ad4">01:05</div>
<div class="t" style="left:861.11px;width:80px;text-align:center;top:887.5px;height:20px;line-height:20px;font-size:15px;color:#1a8ad4">01:35</div>
<div class="t" style="left:912.98px;width:80px;text-align:center;top:887.5px;height:20px;line-height:20px;font-size:15px;color:#1a8ad4">02:05</div>
<div class="t" style="left:964.85px;width:80px;text-align:center;top:887.5px;height:20px;line-height:20px;font-size:15px;color:#1a8ad4">02:35</div>
<div class="t" style="left:1016.72px;width:80px;text-align:center;top:887.5px;height:20px;line-height:20px;font-size:15px;color:#1a8ad4">03:05</div>
<div class="t" style="left:1068.59px;width:80px;text-align:center;top:887.5px;height:20px;line-height:20px;font-size:15px;color:#1a8ad4">03:35</div>
<div class="t" style="left:1120.46px;width:80px;text-align:center;top:887.5px;height:20px;line-height:20px;font-size:15px;color:#1a8ad4">04:05</div>
<div class="t" style="left:1172.33px;width:80px;text-align:center;top:887.5px;height:20px;line-height:20px;font-size:15px;color:#1a8ad4">04:35</div>
<div class="t" style="left:1224.20px;width:80px;text-align:center;top:887.5px;height:20px;line-height:20px;font-size:15px;color:#1a8ad4">05:05</div>
<div class="t" style="left:1276.07px;width:80px;text-align:center;top:887.5px;height:20px;line-height:20px;font-size:15px;color:#1a8ad4">05:35</div>
<div class="t" style="left:1327.94px;width:80px;text-align:center;top:887.5px;height:20px;line-height:20px;font-size:15px;color:#1a8ad4">06:05</div>
<div class="t" style="left:1379.81px;width:80px;text-align:center;top:887.5px;height:20px;line-height:20px;font-size:15px;color:#1a8ad4">06:35</div>
<div class="t" style="left:1431.68px;width:80px;text-align:center;top:887.5px;height:20px;line-height:20px;font-size:15px;color:#1a8ad4">07:05</div>
<div class="t" style="left:1483.55px;width:80px;text-align:center;top:887.5px;height:20px;line-height:20px;font-size:15px;color:#1a8ad4">07:35</div>
<div class="t" style="left:1535.42px;width:80px;text-align:center;top:887.5px;height:20px;line-height:20px;font-size:15px;color:#1a8ad4">08:05</div>
<div class="t" style="left:1587.29px;width:80px;text-align:center;top:887.5px;height:20px;line-height:20px;font-size:15px;color:#1a8ad4">08:35</div>
<div class="t" style="left:1639.16px;width:80px;text-align:center;top:887.5px;height:20px;line-height:20px;font-size:15px;color:#1a8ad4">09:05</div>
<div class="t" style="left:1691.03px;width:80px;text-align:center;top:887.5px;height:20px;line-height:20px;font-size:15px;color:#1a8ad4">09:35</div>
<div class="t" style="left:1742.90px;width:80px;text-align:center;top:887.5px;height:20px;line-height:20px;font-size:15px;color:#1a8ad4">10:05</div>
<div class="t" style="left:1125px;top:370px;height:28px;line-height:28px;font-size:22.5px;font-weight:bold;color:#0e87d2">低压总1</div>
<div class="t" style="left:1220px;top:370px;height:28px;line-height:28px;font-size:22.5px;font-weight:bold;letter-spacing:1.6px;color:#0e87d2">2022-01-17</div>
<div class="t" style="left:1363px;top:370px;height:28px;line-height:28px;font-size:22.5px;font-weight:bold;color:#0e87d2">有功功率</div>
<div class="a" style="left:1202.05px;top:404.75px;width:12.5px;height:12.5px;border-radius:50%;background:#e6a800"></div>
<div class="t" style="left:1221.80px;top:401px;height:20px;line-height:20px;font-size:15px;color:#777">Pa</div>
<div class="a" style="left:1250.05px;top:404.75px;width:12.5px;height:12.5px;border-radius:50%;background:#1bb55c"></div>
<div class="t" style="left:1269.80px;top:401px;height:20px;line-height:20px;font-size:15px;color:#777">Pb</div>
<div class="a" style="left:1300.05px;top:404.75px;width:12.5px;height:12.5px;border-radius:50%;background:#ff4747"></div>
<div class="t" style="left:1319.80px;top:401px;height:20px;line-height:20px;font-size:15px;color:#777">Pc</div>
<div class="a" style="left:1347.55px;top:404.75px;width:12.5px;height:12.5px;border-radius:50%;background:#b3a0dc"></div>
<div class="t" style="left:1367.30px;top:401px;height:20px;line-height:20px;font-size:15px;color:#777">P</div>
<svg style="left:1755px;top:370px" width="130" height="35" viewBox="0 0 130 35">
<g fill="none" stroke="#5f5f5f" stroke-width="1.35">
<path d="M14.9 8 L14.9 23 M6.8 15.6 L14.9 23 L23.7 15.9 M6.2 22.2 L6.2 27.4 L23.7 27.4 L23.7 22.2"/>
<path d="M38.9 12.5 L48.1 12.5 M43.9 8 L43.9 16.6 M50.1 12.5 L58.6 12.5 L58.6 27.4 L43.3 27.4 L43.3 19"/>
<path d="M78.9 8.1 L73.8 12.5 L78.9 16.6 M73.8 12.5 L89.7 12.5 L89.7 27.4 L74.5 27.4 L74.5 18.3"/>
<path d="M105.25 19.4 A9.8 9.8 0 0 1 124.37 15.16 M124.55 19.4 A9.8 9.8 0 0 1 106.0 21.84"/>
<path d="M120.5 14.6 L124.8 14.6 L124.8 10.8" stroke-width="1.2"/>
<path d="M109.2 21.2 L105.4 21.2 L105.4 24.8" stroke-width="1.2"/>
</g></svg>
<div class="a" style="left:1307px;top:682px;width:88px;height:142.5px;border-radius:5px;background:rgba(50,50,50,0.7)"></div>
<div class="t" style="left:1313.5px;top:690px;height:22px;line-height:22px;font-size:17.5px;color:#fff">02:20</div>
<div class="a" style="left:1314px;top:721.40px;width:12px;height:12px;border-radius:50%;background:#e6a800"></div>
<div class="t" style="left:1332.5px;top:716.40px;height:22px;line-height:22px;font-size:17.5px;color:#fff">Pa: 0</div>
<div class="a" style="left:1314px;top:747.65px;width:12px;height:12px;border-radius:50%;background:#1bb55c"></div>
<div class="t" style="left:1332.5px;top:742.65px;height:22px;line-height:22px;font-size:17.5px;color:#fff">Pb: 3.2</div>
<div class="a" style="left:1314px;top:773.90px;width:12px;height:12px;border-radius:50%;background:#ff4747"></div>
<div class="t" style="left:1332.5px;top:768.90px;height:22px;line-height:22px;font-size:17.5px;color:#fff">Pc: 2.6</div>
<div class="a" style="left:1314px;top:800.15px;width:12px;height:12px;border-radius:50%;background:#b3a0dc"></div>
<div class="t" style="left:1332.5px;top:795.15px;height:22px;line-height:22px;font-size:17.5px;color:#fff">P: 5.8</div></body></html>
